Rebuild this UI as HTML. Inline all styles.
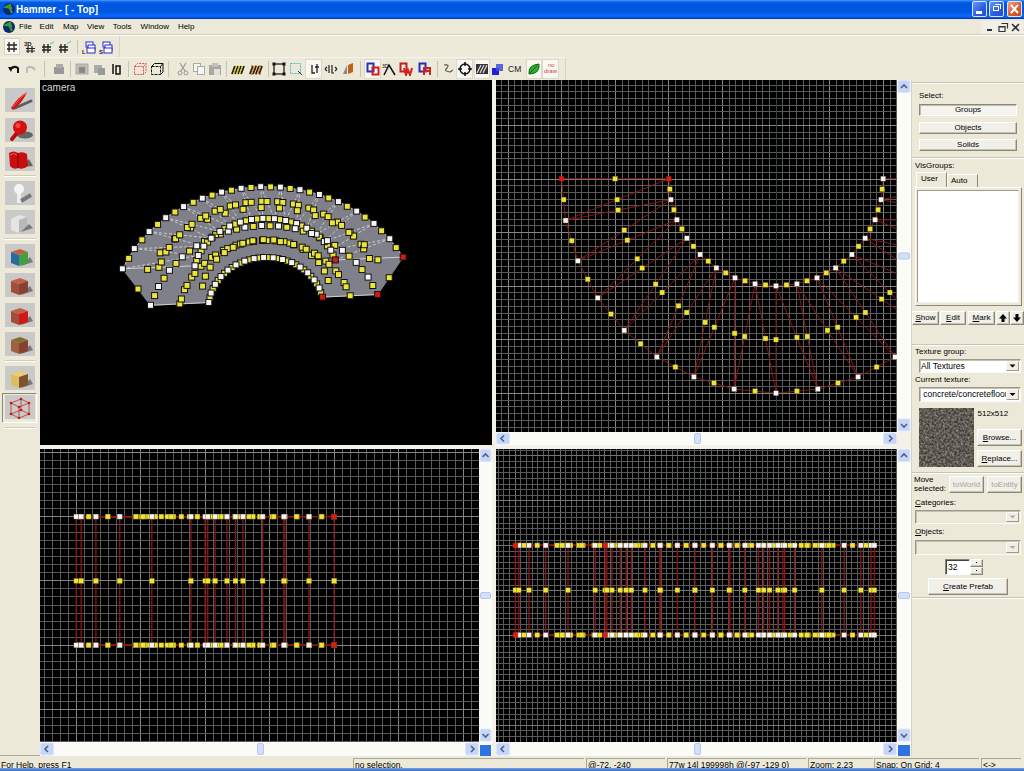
<!DOCTYPE html><html><head><meta charset="utf-8"><style>
html,body{margin:0;padding:0;}
body{width:1024px;height:771px;position:relative;overflow:hidden;background:#ece9d8;font-family:"Liberation Sans",sans-serif;font-size:8px;color:#000;}
.t{position:absolute;white-space:nowrap;line-height:10px;}
svg{display:block}
</style></head><body><div style="position:absolute;left:0px;top:0px;width:1024px;height:18px;background:linear-gradient(#4a9cfa 0px,#1a6cf2 1.5px,#0058e2 3px,#0056e0 12px,#0a66f8 15px,#0a64f4 17px,#0a48c0 18px);"></div><div style="position:absolute;left:0px;top:18px;width:1024px;height:1px;background:#0a3aa8;"></div><div class="t" style="left:16px;top:4px;color:#fff;font-weight:bold;font-size:10px;line-height:12px;">Hammer - [ - Top]</div><svg style="position:absolute;left:2px;top:2px" width="14" height="14"><circle cx="7" cy="7" r="6" fill="#0a2a6a"/><path d="M4,5 L8,3 L9,6 Z M7,5 L10,11" stroke="#3c9a3c" stroke-width="2" fill="#3c9a3c"/></svg><div style="position:absolute;left:972px;top:1px;width:15px;height:16px;background:linear-gradient(135deg,#6a9af6,#2a5ae0 60%,#2050d0);border:1px solid #d8e4fc;border-radius:2px;box-sizing:border-box;"></div><div style="position:absolute;left:989px;top:1px;width:15px;height:16px;background:linear-gradient(135deg,#6a9af6,#2a5ae0 60%,#2050d0);border:1px solid #d8e4fc;border-radius:2px;box-sizing:border-box;"></div><div style="position:absolute;left:1007px;top:1px;width:15px;height:16px;background:linear-gradient(135deg,#f4a080,#d85a30 60%,#c04a20);border:1px solid #d8e4fc;border-radius:2px;box-sizing:border-box;"></div><div style="position:absolute;left:976px;top:11px;width:6px;height:3px;background:#fff;"></div><div style="position:absolute;left:993px;top:6px;width:6px;height:5px;border:1.5px solid #fff;box-sizing:border-box;"></div><div style="position:absolute;left:995px;top:4px;width:6px;height:5px;border-top:1.5px solid #fff;border-right:1.5px solid #fff;box-sizing:border-box;"></div><svg style="position:absolute;left:1007px;top:1px" width="15" height="16"><path d="M4,4 L11,12 M11,4 L4,12" stroke="#fff" stroke-width="2"/></svg><div style="position:absolute;left:0px;top:19px;width:1024px;height:15px;background:#ece9d8;border-top:1px solid #dce4f4;box-sizing:border-box;"></div><svg style="position:absolute;left:2px;top:20px" width="14" height="14"><circle cx="7" cy="7" r="6" fill="#0a2a6a"/><path d="M4,5 L8,3 L9,6 Z M7,5 L10,11" stroke="#3c9a3c" stroke-width="2" fill="#3c9a3c"/></svg><div class="t" style="left:19px;top:22px;font-size:8px;">File</div><div class="t" style="left:39.6px;top:22px;font-size:8px;">Edit</div><div class="t" style="left:63px;top:22px;font-size:8px;">Map</div><div class="t" style="left:87px;top:22px;font-size:8px;">View</div><div class="t" style="left:112.8px;top:22px;font-size:8px;">Tools</div><div class="t" style="left:140.6px;top:22px;font-size:8px;">Window</div><div class="t" style="left:177.9px;top:22px;font-size:8px;">Help</div><div style="position:absolute;left:981px;top:21px;width:42px;height:13px;background:#f2f0e6;"></div><div style="position:absolute;left:987px;top:29px;width:5px;height:2px;background:#333;"></div><svg style="position:absolute;left:997px;top:22px" width="12" height="11"><path d="M4.5,1.5 H10.5 V6.5 M2,4.5 H8 V9.5 H2 Z M2,5 H8" fill="none" stroke="#333" stroke-width="1.2"/></svg><svg style="position:absolute;left:1010px;top:22px" width="11" height="11"><path d="M2,2 L9,9 M9,2 L2,9" stroke="#333" stroke-width="1.6"/></svg><div style="position:absolute;left:0px;top:34px;width:1024px;height:1px;background:#d4d0c0;"></div><div style="position:absolute;left:0px;top:35px;width:1024px;height:1px;background:#fbfaf5;"></div><div style="position:absolute;left:0px;top:36px;width:120px;height:21px;background:#ece9d8;border-right:1px solid #d8d4c4;box-sizing:border-box;"></div><div style="position:absolute;left:4px;top:38px;width:16px;height:17px;background:#faf9f4;border:1px solid #d6d2c4;box-sizing:border-box;"></div><svg style="position:absolute;left:5px;top:40px" width="14" height="14"><path d="M4,2 V12 M9,2 V12 M2,5 H12 M2,9 H12" stroke="#222" stroke-width="1.3"/></svg><svg style="position:absolute;left:23px;top:40px" width="14" height="14"><text x="1" y="6" font-size="6" font-weight="bold" font-family="Liberation Sans" fill="#222">3D</text><path d="M5,6 V13 M9,6 V13 M3,8.5 H12 M3,11 H12" stroke="#222" stroke-width="1.2"/></svg><svg style="position:absolute;left:41px;top:40px" width="14" height="14"><path d="M3,4 V13 M7,4 V13 M1,7 H10 M1,10 H10" stroke="#222" stroke-width="1.3"/><path d="M9,4 L13,2" stroke="#7ad6c4" stroke-width="1.5"/></svg><svg style="position:absolute;left:58px;top:40px" width="14" height="14"><path d="M3,4 V13 M7,4 V13 M1,7 H10 M1,10 H10" stroke="#222" stroke-width="1.3"/><path d="M9,4 L13,1" stroke="#7ad6c4" stroke-width="1.5"/></svg><div style="position:absolute;left:77px;top:40px;width:1px;height:14px;background:#c8c4b4;"></div><svg style="position:absolute;left:82px;top:40px" width="14" height="14"><rect x="4" y="2" width="7" height="5" fill="#fff" stroke="#2a2ad0"/><rect x="6" y="5" width="7" height="5" fill="#fff" stroke="#2a2ad0"/><rect x="5" y="8" width="8" height="5" fill="#fff" stroke="#2a2ad0"/><text x="0" y="14" font-size="6" font-weight="bold" font-family="Liberation Sans" fill="#222">L</text></svg><svg style="position:absolute;left:99px;top:40px" width="14" height="14"><rect x="4" y="2" width="7" height="5" fill="#fff" stroke="#2a2ad0"/><rect x="6" y="5" width="7" height="5" fill="#fff" stroke="#2a2ad0"/><rect x="5" y="8" width="8" height="5" fill="#fff" stroke="#2a2ad0"/><text x="0" y="14" font-size="6" font-weight="bold" font-family="Liberation Sans" fill="#222">S</text></svg><div style="position:absolute;left:0px;top:57px;width:566px;height:1px;background:#f6f4ec;"></div><div style="position:absolute;left:0px;top:58px;width:566px;height:22px;background:#ece9d8;border-right:1px solid #d8d4c4;box-sizing:border-box;"></div><div style="position:absolute;left:44px;top:61px;width:1px;height:16px;background:#c8c4b4;"></div><div style="position:absolute;left:70px;top:61px;width:1px;height:16px;background:#c8c4b4;"></div><div style="position:absolute;left:128px;top:61px;width:1px;height:16px;background:#c8c4b4;"></div><div style="position:absolute;left:168px;top:61px;width:1px;height:16px;background:#c8c4b4;"></div><div style="position:absolute;left:226px;top:61px;width:1px;height:16px;background:#c8c4b4;"></div><div style="position:absolute;left:268px;top:61px;width:1px;height:16px;background:#c8c4b4;"></div><div style="position:absolute;left:360px;top:61px;width:1px;height:16px;background:#c8c4b4;"></div><div style="position:absolute;left:437px;top:61px;width:1px;height:16px;background:#c8c4b4;"></div><div style="position:absolute;left:305px;top:59px;width:17px;height:20px;background:#f8f7f2;border:1px solid #dcd8ca;box-sizing:border-box;"></div><div style="position:absolute;left:364px;top:59px;width:17px;height:20px;background:#f8f7f2;border:1px solid #dcd8ca;box-sizing:border-box;"></div><div style="position:absolute;left:456px;top:59px;width:17px;height:20px;background:#f8f7f2;border:1px solid #dcd8ca;box-sizing:border-box;"></div><div style="position:absolute;left:474px;top:59px;width:16px;height:20px;background:#f8f7f2;border:1px solid #dcd8ca;box-sizing:border-box;"></div><div style="position:absolute;left:526px;top:59px;width:16px;height:20px;background:#f8f7f2;border:1px solid #dcd8ca;box-sizing:border-box;"></div><div style="position:absolute;left:542px;top:59px;width:17px;height:20px;background:#f8f7f2;border:1px solid #dcd8ca;box-sizing:border-box;"></div><svg style="position:absolute;left:7px;top:62px" width="14" height="14"><path d="M3,8 Q6,3 11,6 L11,11" fill="none" stroke="#111" stroke-width="2"/><path d="M1,5 L4,10 L6,5 Z" fill="#111"/></svg><svg style="position:absolute;left:24px;top:62px" width="14" height="14"><path d="M11,8 Q8,3 3,6 L3,11" fill="none" stroke="#bbb" stroke-width="2"/></svg><svg style="position:absolute;left:52px;top:62px" width="14" height="14"><rect x="2" y="5" width="10" height="7" fill="#999"/><rect x="4" y="2" width="7" height="4" fill="#aaa"/></svg><svg style="position:absolute;left:75px;top:62px" width="14" height="14"><rect x="1" y="2" width="12" height="10" fill="#bdbdb5" stroke="#aaa"/><rect x="4" y="5" width="6" height="6" fill="#888"/></svg><svg style="position:absolute;left:92px;top:62px" width="14" height="14"><rect x="2" y="3" width="8" height="8" fill="#aaa"/><rect x="6" y="6" width="7" height="7" fill="#999"/></svg><svg style="position:absolute;left:110px;top:62px" width="14" height="14"><path d="M3,2 V12 M6,4 H10 V12 H6 Z" stroke="#111" stroke-width="1.5" fill="none"/></svg><svg style="position:absolute;left:133px;top:62px" width="14" height="14"><rect x="1.5" y="4.5" width="9" height="8" fill="none" stroke="#e05050" stroke-dasharray="2 1"/><path d="M1.5,4.5 L4.5,1.5 H13 V10 L10.5,12.5 M10.5,4.5 L13,1.5" fill="none" stroke="#e05050" stroke-dasharray="2 1"/></svg><svg style="position:absolute;left:150px;top:62px" width="14" height="14"><rect x="1.5" y="4.5" width="9" height="8" fill="none" stroke="#111" stroke-dasharray="3 1"/><path d="M1.5,4.5 L4.5,1.5 H13 V10 L10.5,12.5 M10.5,4.5 L13,1.5" fill="none" stroke="#111"/></svg><svg style="position:absolute;left:176px;top:62px" width="14" height="14"><path d="M4,1 L9,9 M10,1 L5,9" stroke="#999" stroke-width="1.2"/><circle cx="4" cy="11" r="2" fill="none" stroke="#999"/><circle cx="10" cy="11" r="2" fill="none" stroke="#999"/></svg><svg style="position:absolute;left:192px;top:62px" width="14" height="14"><rect x="1.5" y="1.5" width="7" height="8" fill="#f4f4f0" stroke="#aaa"/><rect x="5.5" y="4.5" width="7" height="8" fill="#f4f4f0" stroke="#aaa"/></svg><svg style="position:absolute;left:208px;top:62px" width="14" height="14"><rect x="1" y="3" width="12" height="10" fill="#a8a8a0"/><rect x="4" y="1" width="6" height="4" fill="#c0c0b8"/><rect x="6" y="7" width="6" height="6" fill="#e0e0d8"/></svg><svg style="position:absolute;left:231px;top:62px" width="14" height="14"><path d="M1,12 L4,4 M4,12 L7,4 M7,12 L10,4 M10,12 L13,4" stroke="#222" stroke-width="2"/><path d="M2.5,12 L5.5,4 M5.5,12 L8.5,4 M8.5,12 L11.5,4" stroke="#e8d020" stroke-width="1.2"/></svg><svg style="position:absolute;left:249px;top:62px" width="14" height="14"><path d="M1,12 L4,4 M4,12 L7,4 M7,12 L10,4 M10,12 L13,4" stroke="#222" stroke-width="2"/><path d="M2.5,12 L5.5,4 M8.5,12 L11.5,4" stroke="#e8a020" stroke-width="1.4"/><path d="M2,4 H12 M2,12 H12" stroke="#c04010" stroke-width="1" stroke-dasharray="2 2"/></svg><svg style="position:absolute;left:272px;top:62px" width="14" height="14"><rect x="2" y="2" width="10" height="10" fill="none" stroke="#111" stroke-width="1.2"/><rect x="0.5" y="0.5" width="3" height="3" fill="#111"/><rect x="10.5" y="0.5" width="3" height="3" fill="#111"/><rect x="0.5" y="10.5" width="3" height="3" fill="#111"/><rect x="10.5" y="10.5" width="3" height="3" fill="#111"/></svg><svg style="position:absolute;left:289px;top:62px" width="14" height="14"><rect x="1.5" y="1.5" width="10" height="10" fill="none" stroke="#40c0c0" stroke-dasharray="2 1"/><path d="M9,9 L13,13" stroke="#333"/></svg><svg style="position:absolute;left:309px;top:62px" width="14" height="14"><path d="M3,3 V11 H6 M8,2 V11 M6,5 H10" stroke="#222" stroke-width="1.3" fill="none"/></svg><svg style="position:absolute;left:324px;top:62px" width="14" height="14"><path d="M1,7 L3,5 M1,7 L3,9 M13,7 L11,5 M13,7 L11,9 M5,3 V11 M8,3 V11 H10" stroke="#222" stroke-width="1.2" fill="none"/></svg><svg style="position:absolute;left:341px;top:62px" width="14" height="14"><path d="M2,12 L6,3 L6,12 Z" fill="#888"/><path d="M7,3 L12,1 L12,10 L7,12 Z" fill="#c06020"/></svg><svg style="position:absolute;left:366px;top:62px" width="14" height="14"><rect x="1.5" y="1.5" width="6" height="8" fill="none" stroke="#2030c0" stroke-width="2"/><rect x="6.5" y="5.5" width="6" height="7" fill="none" stroke="#d02020" stroke-width="2"/></svg><svg style="position:absolute;left:382px;top:62px" width="14" height="14"><path d="M2,13 L7,3 L13,13" fill="none" stroke="#111" stroke-width="1.5"/><text x="0" y="6" font-size="5" font-family="Liberation Sans" fill="#111">3D</text></svg><svg style="position:absolute;left:399px;top:62px" width="15" height="14"><rect x="1.5" y="1.5" width="6" height="8" fill="none" stroke="#c02020" stroke-width="2"/><path d="M5,6 L7,13 L9,8 L11,13 L13,6" fill="none" stroke="#d02020" stroke-width="2"/></svg><svg style="position:absolute;left:418px;top:62px" width="14" height="14"><rect x="1.5" y="1.5" width="6" height="8" fill="none" stroke="#2030c0" stroke-width="2"/><path d="M6,13 V6 H12 V13 M6,9 H12" fill="none" stroke="#d02020" stroke-width="2"/></svg><svg style="position:absolute;left:441px;top:62px" width="12" height="14"><path d="M3,3 Q9,2 6,6 Q2,9 9,10 M9,10 L12,8" fill="none" stroke="#555" stroke-width="1.2"/></svg><svg style="position:absolute;left:458px;top:62px" width="14" height="14"><circle cx="7" cy="7" r="5" fill="none" stroke="#111" stroke-width="1.5"/><path d="M7,0 V4 M7,10 V14 M0,7 H4 M10,7 H14" stroke="#111" stroke-width="1.5"/></svg><svg style="position:absolute;left:475px;top:62px" width="14" height="14"><rect x="1" y="2" width="12" height="10" fill="#333"/><path d="M2,11 L6,3 M5,11 L9,3 M8,11 L12,3" stroke="#ddd" stroke-width="1.2"/></svg><svg style="position:absolute;left:491px;top:62px" width="14" height="14"><rect x="1" y="6" width="7" height="7" fill="#2020d0"/><rect x="5" y="2" width="7" height="7" fill="#4050e0" opacity="0.85"/></svg><div class="t" style="left:508px;top:64px;font-size:8.5px;color:#222;">CM</div><svg style="position:absolute;left:527px;top:62px" width="14" height="14"><path d="M2,12 Q1,3 12,2 Q13,12 2,12 Z" fill="#30b030" stroke="#106010"/><path d="M3,11 L10,4" stroke="#106010"/></svg><div class="t" style="left:545px;top:62px;font-size:6px;color:#d04040;line-height:6px;left:548px;">no</div><div class="t" style="left:544px;top:68px;font-size:6px;color:#d04040;line-height:6px;">draw</div><div style="position:absolute;left:0px;top:80px;width:40px;height:676px;background:#ece9d8;"></div><div style="position:absolute;left:5px;top:88px;width:30px;height:24px;background:#c9c9c7;"></div><svg style="position:absolute;left:5px;top:88px" width="30" height="24"><path d="M10,20 L26,13" stroke="#3a3a3a" stroke-width="3" opacity="0.75" stroke-linecap="round"/><path d="M6,20 Q12,10 22,4 Q18,14 8,22 Z" fill="#d81010"/><path d="M8,19 Q14,11 21,5" stroke="#ff6060" stroke-width="1" fill="none"/></svg><div style="position:absolute;left:5px;top:118px;width:30px;height:24px;background:#c9c9c7;"></div><svg style="position:absolute;left:5px;top:118px" width="30" height="24"><ellipse cx="20" cy="17" rx="8" ry="3.5" fill="#3a3a3a" opacity="0.7"/><path d="M12,15 L7,21" stroke="#b80c0c" stroke-width="4" stroke-linecap="round"/><circle cx="15" cy="9.5" r="7" fill="#d41010"/><circle cx="13" cy="7.5" r="2.5" fill="#ff5050" opacity="0.8"/></svg><div style="position:absolute;left:5px;top:147px;width:30px;height:24px;background:#c9c9c7;"></div><svg style="position:absolute;left:5px;top:147px" width="30" height="24"><path d="M16,20 L28,19 L24,12 Z" fill="#3a3a3a" opacity="0.7"/><path d="M4,6 Q9,3 13,6 Q18,4 22,7 L23,19 Q18,23 13,21 Q8,23 5,19 Z" fill="#c80e0e"/><path d="M13,6 V21" stroke="#8a0808" stroke-width="1.2"/><path d="M5,8 Q9,5 12,8" stroke="#ff5a5a" stroke-width="1" fill="none"/></svg><div style="position:absolute;left:5px;top:181px;width:30px;height:24px;background:#c9c9c7;"></div><svg style="position:absolute;left:5px;top:181px" width="30" height="24"><path d="M14,12 V22" stroke="#eee" stroke-width="4"/><path d="M16,20 L26,14" stroke="#444" stroke-width="4" opacity="0.6"/><circle cx="14" cy="8" r="5" fill="#f4f4f4"/></svg><div style="position:absolute;left:5px;top:210px;width:30px;height:24px;background:#c9c9c7;"></div><svg style="position:absolute;left:5px;top:210px" width="30" height="24"><path d="M6,9 L14,5 L22,7 L22,19 L14,23 L6,20 Z" fill="#e4e4e4"/><path d="M14,10 L22,7 V19 L14,23 Z" fill="#b8b8b8"/><path d="M16,22 L28,18 L24,14" fill="#444" opacity="0.6"/></svg><div style="position:absolute;left:5px;top:244px;width:30px;height:24px;background:#c9c9c7;"></div><svg style="position:absolute;left:5px;top:244px" width="30" height="24"><path d="M16,22 L28,18 L25,13" fill="#444" opacity="0.6"/><path d="M6,8 L15,5 L23,8 L14,11 Z" fill="#c06040"/><path d="M6,8 L14,11 L14,22 L6,19 Z" fill="#2a6aa0"/><path d="M14,11 L23,8 L23,19 L14,22 Z" fill="#40a040"/></svg><div style="position:absolute;left:5px;top:273px;width:30px;height:24px;background:#c9c9c7;"></div><svg style="position:absolute;left:5px;top:273px" width="30" height="24"><path d="M16,22 L28,18 L25,13" fill="#444" opacity="0.6"/><path d="M6,8 L15,5 L23,8 L14,11 Z" fill="#c06048"/><path d="M6,8 L14,11 L14,22 L6,19 Z" fill="#a05038"/><path d="M14,11 L23,8 L23,19 L14,22 Z" fill="#884030"/></svg><div style="position:absolute;left:5px;top:303px;width:30px;height:24px;background:#c9c9c7;"></div><svg style="position:absolute;left:5px;top:303px" width="30" height="24"><path d="M16,22 L28,18 L25,13" fill="#444" opacity="0.6"/><path d="M6,8 L15,5 L23,8 L14,11 Z" fill="#c06048"/><path d="M6,8 L14,11 L14,22 L6,19 Z" fill="#a05038"/><path d="M14,11 L23,8 L23,19 L14,22 Z" fill="#d01818"/></svg><div style="position:absolute;left:5px;top:332px;width:30px;height:24px;background:#c9c9c7;"></div><svg style="position:absolute;left:5px;top:332px" width="30" height="24"><path d="M16,22 L28,18 L25,13" fill="#444" opacity="0.6"/><path d="M6,8 L15,5 L23,8 L14,11 Z" fill="#807030"/><path d="M6,8 L14,11 L14,22 L6,19 Z" fill="#a06040"/><path d="M14,11 L23,8 L23,19 L14,22 Z" fill="#884030"/></svg><div style="position:absolute;left:5px;top:366px;width:30px;height:24px;background:#c9c9c7;"></div><svg style="position:absolute;left:5px;top:366px" width="30" height="24"><path d="M16,22 L28,18 L25,13" fill="#444" opacity="0.6"/><path d="M6,8 L15,5 L23,8 L14,11 Z" fill="#e8d070"/><path d="M6,8 L14,11 L14,22 L6,19 Z" fill="#d8c060"/><path d="M14,11 L23,8 L23,19 L14,22 Z" fill="#805030"/></svg><div style="position:absolute;left:2px;top:393px;width:35px;height:30px;border:1px solid #fff;border-right-color:#b8b4a4;border-bottom-color:#b8b4a4;box-sizing:border-box;"></div><div style="position:absolute;left:2px;top:393px;width:35px;height:30px;border:1px solid #8a877a;border-right-color:#fff;border-bottom-color:#fff;box-sizing:border-box;"></div><div style="position:absolute;left:5px;top:395px;width:30px;height:24px;background:#c9c9c7;"></div><svg style="position:absolute;left:5px;top:395px" width="30" height="24"><path d="M6,8 L16,4 L24,8 L24,19 L14,23 L6,19 Z M6,8 L14,12 L24,8 M14,12 V23 M6,19 L16,15 L24,19 M16,4 V15" fill="none" stroke="#c03030" stroke-width="0.8"/><circle cx="6" cy="8" r="1.3" fill="#c01818"/><circle cx="16" cy="4" r="1.3" fill="#c01818"/><circle cx="24" cy="8" r="1.3" fill="#c01818"/><circle cx="14" cy="12" r="1.3" fill="#c01818"/><circle cx="6" cy="19" r="1.3" fill="#c01818"/><circle cx="14" cy="23" r="1.3" fill="#c01818"/><circle cx="24" cy="19" r="1.3" fill="#c01818"/><circle cx="16" cy="15" r="1.3" fill="#c01818"/></svg><div style="position:absolute;left:4px;top:175px;width:32px;height:1px;background:#d0ccbc;"></div><div style="position:absolute;left:4px;top:176px;width:32px;height:1px;background:#fff;"></div><div style="position:absolute;left:4px;top:238px;width:32px;height:1px;background:#d0ccbc;"></div><div style="position:absolute;left:4px;top:239px;width:32px;height:1px;background:#fff;"></div><div style="position:absolute;left:4px;top:360px;width:32px;height:1px;background:#d0ccbc;"></div><div style="position:absolute;left:4px;top:361px;width:32px;height:1px;background:#fff;"></div><div style="position:absolute;left:4px;top:427px;width:32px;height:1px;background:#d0ccbc;"></div><div style="position:absolute;left:4px;top:428px;width:32px;height:1px;background:#fff;"></div><div style="position:absolute;left:0px;top:755px;width:40px;height:1px;background:#aca899;"></div><div style="position:absolute;left:492px;top:80px;width:4px;height:676px;background:#f3f1e8;"></div><div style="position:absolute;left:40px;top:445px;width:871px;height:4px;background:#f3f1e8;"></div><svg style="position:absolute;left:40px;top:80px" width="452" height="365" viewBox="40 80 452 365"><rect x="40" y="80" width="452" height="365" fill="#000"/><g fill="#80808a" stroke="#80808a" stroke-width="0.6"><polygon points="403.2,257.1 389.8,238.7 330.8,250.2 335.3,259.9"/><polygon points="377.7,294.5 368.1,277.1 319.1,288 322.4,297.1"/><polygon points="377.7,294.5 368.1,277.1 389.8,238.7 403.2,257.1"/><polygon points="322.4,297.1 319.1,288 330.8,250.2 335.3,259.9"/><polygon points="389.8,238.7 374,223.4 324.3,241.6 330.8,250.2"/><polygon points="368.1,277.1 356.2,262.4 314.1,279.9 319.1,288"/><polygon points="368.1,277.1 356.2,262.4 374,223.4 389.8,238.7"/><polygon points="319.1,288 314.1,279.9 324.3,241.6 330.8,250.2"/><polygon points="374,223.4 356.7,211.1 316.2,234.2 324.3,241.6"/><polygon points="356.2,262.4 342.4,250.3 307.7,272.8 314.1,279.9"/><polygon points="356.2,262.4 342.4,250.3 356.7,211.1 374,223.4"/><polygon points="314.1,279.9 307.7,272.8 316.2,234.2 324.3,241.6"/><polygon points="356.7,211.1 338.4,201.6 306.8,228.2 316.2,234.2"/><polygon points="342.4,250.3 327.4,240.7 300.1,267.1 307.7,272.8"/><polygon points="342.4,250.3 327.4,240.7 338.4,201.6 356.7,211.1"/><polygon points="307.7,272.8 300.1,267.1 306.8,228.2 316.2,234.2"/><polygon points="338.4,201.6 319.4,194.5 296.6,223.6 306.8,228.2"/><polygon points="327.4,240.7 311.6,233.5 291.7,262.6 300.1,267.1"/><polygon points="327.4,240.7 311.6,233.5 319.4,194.5 338.4,201.6"/><polygon points="300.1,267.1 291.7,262.6 296.6,223.6 306.8,228.2"/><polygon points="319.4,194.5 300,189.7 285.7,220.5 296.6,223.6"/><polygon points="311.6,233.5 295.2,228.7 282.6,259.5 291.7,262.6"/><polygon points="311.6,233.5 295.2,228.7 300,189.7 319.4,194.5"/><polygon points="291.7,262.6 282.6,259.5 285.7,220.5 296.6,223.6"/><polygon points="300,189.7 280.4,187.1 274.4,218.7 285.7,220.5"/><polygon points="295.2,228.7 278.5,226 273.2,257.8 282.6,259.5"/><polygon points="295.2,228.7 278.5,226 280.4,187.1 300,189.7"/><polygon points="282.6,259.5 273.2,257.8 274.4,218.7 285.7,220.5"/><polygon points="280.4,187.1 260.7,186.7 262.9,218.4 274.4,218.7"/><polygon points="278.5,226 261.7,225.5 263.6,257.5 273.2,257.8"/><polygon points="278.5,226 261.7,225.5 260.7,186.7 280.4,187.1"/><polygon points="273.2,257.8 263.6,257.5 262.9,218.4 274.4,218.7"/><polygon points="260.7,186.7 241.1,188.3 251.5,219.5 262.9,218.4"/><polygon points="261.7,225.5 244.9,227.2 254.1,258.6 263.6,257.5"/><polygon points="261.7,225.5 244.9,227.2 241.1,188.3 260.7,186.7"/><polygon points="263.6,257.5 254.1,258.6 251.5,219.5 262.9,218.4"/><polygon points="241.1,188.3 221.6,192.1 240.3,222.1 251.5,219.5"/><polygon points="244.9,227.2 228.3,231.1 244.8,261.1 254.1,258.6"/><polygon points="244.9,227.2 228.3,231.1 221.6,192.1 241.1,188.3"/><polygon points="254.1,258.6 244.8,261.1 240.3,222.1 251.5,219.5"/><polygon points="221.6,192.1 202.3,198.2 229.7,226 240.3,222.1"/><polygon points="228.3,231.1 212.1,237.3 236,264.9 244.8,261.1"/><polygon points="228.3,231.1 212.1,237.3 202.3,198.2 221.6,192.1"/><polygon points="244.8,261.1 236,264.9 229.7,226 240.3,222.1"/><polygon points="202.3,198.2 183.6,206.6 219.9,231.4 229.7,226"/><polygon points="212.1,237.3 196.7,245.8 228,270.1 236,264.9"/><polygon points="212.1,237.3 196.7,245.8 183.6,206.6 202.3,198.2"/><polygon points="236,264.9 228,270.1 219.9,231.4 229.7,226"/><polygon points="183.6,206.6 165.7,217.7 211.2,238.2 219.9,231.4"/><polygon points="196.7,245.8 182.3,256.8 221,276.6 228,270.1"/><polygon points="196.7,245.8 182.3,256.8 165.7,217.7 183.6,206.6"/><polygon points="228,270.1 221,276.6 211.2,238.2 219.9,231.4"/><polygon points="165.7,217.7 149.1,231.6 203.8,246.2 211.2,238.2"/><polygon points="182.3,256.8 169.4,270.3 215.3,284.3 221,276.6"/><polygon points="182.3,256.8 169.4,270.3 149.1,231.6 165.7,217.7"/><polygon points="221,276.6 215.3,284.3 203.8,246.2 211.2,238.2"/><polygon points="149.1,231.6 134.3,248.6 198.3,255.5 203.8,246.2"/><polygon points="169.4,270.3 158.5,286.5 211.1,293 215.3,284.3"/><polygon points="169.4,270.3 158.5,286.5 134.3,248.6 149.1,231.6"/><polygon points="215.3,284.3 211.1,293 198.3,255.5 203.8,246.2"/><polygon points="134.3,248.6 122.4,268.8 195,265.8 198.3,255.5"/><polygon points="158.5,286.5 150.5,305.3 208.8,302.5 211.1,293"/><polygon points="158.5,286.5 150.5,305.3 122.4,268.8 134.3,248.6"/><polygon points="211.1,293 208.8,302.5 195,265.8 198.3,255.5"/><polygon points="150.5,305.3 208.8,302.5 195,265.8 122.4,268.8"/><polygon points="377.7,294.5 322.4,297.1 335.3,259.9 403.2,257.1"/></g><g stroke="#e8e8f4" stroke-width="1" stroke-dasharray="3 2" opacity="0.7"><line x1="403.2" y1="257.1" x2="389.8" y2="238.7"/><line x1="335.3" y1="259.9" x2="330.8" y2="250.2"/><line x1="389.8" y1="238.7" x2="330.8" y2="250.2"/><line x1="389.8" y1="238.7" x2="335.3" y2="259.9"/><line x1="389.8" y1="238.7" x2="374" y2="223.4"/><line x1="330.8" y1="250.2" x2="324.3" y2="241.6"/><line x1="374" y1="223.4" x2="324.3" y2="241.6"/><line x1="374" y1="223.4" x2="330.8" y2="250.2"/><line x1="374" y1="223.4" x2="356.7" y2="211.1"/><line x1="324.3" y1="241.6" x2="316.2" y2="234.2"/><line x1="356.7" y1="211.1" x2="316.2" y2="234.2"/><line x1="356.7" y1="211.1" x2="324.3" y2="241.6"/><line x1="356.7" y1="211.1" x2="338.4" y2="201.6"/><line x1="316.2" y1="234.2" x2="306.8" y2="228.2"/><line x1="338.4" y1="201.6" x2="306.8" y2="228.2"/><line x1="338.4" y1="201.6" x2="316.2" y2="234.2"/><line x1="338.4" y1="201.6" x2="319.4" y2="194.5"/><line x1="306.8" y1="228.2" x2="296.6" y2="223.6"/><line x1="319.4" y1="194.5" x2="296.6" y2="223.6"/><line x1="319.4" y1="194.5" x2="306.8" y2="228.2"/><line x1="319.4" y1="194.5" x2="300" y2="189.7"/><line x1="296.6" y1="223.6" x2="285.7" y2="220.5"/><line x1="300" y1="189.7" x2="285.7" y2="220.5"/><line x1="300" y1="189.7" x2="296.6" y2="223.6"/><line x1="300" y1="189.7" x2="280.4" y2="187.1"/><line x1="285.7" y1="220.5" x2="274.4" y2="218.7"/><line x1="280.4" y1="187.1" x2="274.4" y2="218.7"/><line x1="280.4" y1="187.1" x2="285.7" y2="220.5"/><line x1="280.4" y1="187.1" x2="260.7" y2="186.7"/><line x1="274.4" y1="218.7" x2="262.9" y2="218.4"/><line x1="260.7" y1="186.7" x2="262.9" y2="218.4"/><line x1="260.7" y1="186.7" x2="274.4" y2="218.7"/><line x1="260.7" y1="186.7" x2="241.1" y2="188.3"/><line x1="262.9" y1="218.4" x2="251.5" y2="219.5"/><line x1="241.1" y1="188.3" x2="251.5" y2="219.5"/><line x1="241.1" y1="188.3" x2="262.9" y2="218.4"/><line x1="241.1" y1="188.3" x2="221.6" y2="192.1"/><line x1="251.5" y1="219.5" x2="240.3" y2="222.1"/><line x1="221.6" y1="192.1" x2="240.3" y2="222.1"/><line x1="221.6" y1="192.1" x2="251.5" y2="219.5"/><line x1="221.6" y1="192.1" x2="202.3" y2="198.2"/><line x1="240.3" y1="222.1" x2="229.7" y2="226"/><line x1="202.3" y1="198.2" x2="229.7" y2="226"/><line x1="202.3" y1="198.2" x2="240.3" y2="222.1"/><line x1="202.3" y1="198.2" x2="183.6" y2="206.6"/><line x1="229.7" y1="226" x2="219.9" y2="231.4"/><line x1="183.6" y1="206.6" x2="219.9" y2="231.4"/><line x1="183.6" y1="206.6" x2="229.7" y2="226"/><line x1="183.6" y1="206.6" x2="165.7" y2="217.7"/><line x1="219.9" y1="231.4" x2="211.2" y2="238.2"/><line x1="165.7" y1="217.7" x2="211.2" y2="238.2"/><line x1="165.7" y1="217.7" x2="219.9" y2="231.4"/><line x1="165.7" y1="217.7" x2="149.1" y2="231.6"/><line x1="211.2" y1="238.2" x2="203.8" y2="246.2"/><line x1="149.1" y1="231.6" x2="203.8" y2="246.2"/><line x1="149.1" y1="231.6" x2="211.2" y2="238.2"/><line x1="149.1" y1="231.6" x2="134.3" y2="248.6"/><line x1="203.8" y1="246.2" x2="198.3" y2="255.5"/><line x1="134.3" y1="248.6" x2="198.3" y2="255.5"/><line x1="134.3" y1="248.6" x2="203.8" y2="246.2"/><line x1="134.3" y1="248.6" x2="122.4" y2="268.8"/><line x1="198.3" y1="255.5" x2="195" y2="265.8"/><line x1="122.4" y1="268.8" x2="198.3" y2="255.5"/></g><g stroke="#e4e4e4" stroke-width="1" opacity="0.8"><line x1="377.7" y1="294.5" x2="322.4" y2="297.1"/><line x1="403.2" y1="257.1" x2="335.3" y2="259.9"/><line x1="150.5" y1="305.3" x2="208.8" y2="302.5"/><line x1="122.4" y1="268.8" x2="195" y2="265.8"/></g><g opacity="0.4"></g><g stroke="#101010" stroke-width="1"><rect x="369.8" y="282.5" width="6" height="6" fill="#ece43a"/><rect x="317.7" y="289.5" width="6" height="6" fill="#ece43a"/><rect x="347.2" y="292.8" width="6" height="6" fill="#ece43a"/><rect x="341.1" y="279.5" width="6" height="6" fill="#ece43a"/><rect x="343.1" y="283.8" width="6" height="6" fill="#ece43a"/><rect x="393.2" y="244.6" width="6" height="6" fill="#ece43a"/><rect x="330" y="252" width="6" height="6" fill="#ece43a"/><rect x="366.4" y="255.5" width="6" height="6" fill="#ece43a"/><rect x="358" y="241.3" width="6" height="6" fill="#ece43a"/><rect x="360.7" y="245.9" width="6" height="6" fill="#ece43a"/><rect x="386.2" y="274.7" width="6" height="6" fill="#ece43a"/><rect x="325.2" y="277.5" width="6" height="6" fill="#ece43a"/><rect x="374.9" y="256.8" width="6" height="6" fill="#ece43a"/><rect x="321.4" y="268" width="6" height="6" fill="#ece43a"/><rect x="359" y="266.6" width="6" height="6" fill="#ece43a"/><rect x="313.6" y="280.9" width="6" height="6" fill="#ece43a"/><rect x="332.8" y="267.9" width="6" height="6" fill="#ece43a"/><rect x="335.5" y="271.6" width="6" height="6" fill="#ece43a"/><rect x="378.6" y="227.8" width="6" height="6" fill="#ece43a"/><rect x="324.5" y="242.8" width="6" height="6" fill="#ece43a"/><rect x="347.1" y="229.2" width="6" height="6" fill="#ece43a"/><rect x="350.6" y="233.1" width="6" height="6" fill="#ece43a"/><rect x="361.3" y="241.7" width="6" height="6" fill="#ece43a"/><rect x="315.7" y="259.6" width="6" height="6" fill="#ece43a"/><rect x="346.1" y="253.2" width="6" height="6" fill="#ece43a"/><rect x="307.8" y="273.3" width="6" height="6" fill="#ece43a"/><rect x="322.8" y="258.1" width="6" height="6" fill="#ece43a"/><rect x="326" y="261.3" width="6" height="6" fill="#ece43a"/><rect x="362.1" y="214.1" width="6" height="6" fill="#ece43a"/><rect x="317.2" y="234.8" width="6" height="6" fill="#ece43a"/><rect x="334.5" y="219.1" width="6" height="6" fill="#ece43a"/><rect x="338.6" y="222.4" width="6" height="6" fill="#ece43a"/><rect x="345.9" y="229.4" width="6" height="6" fill="#ece43a"/><rect x="308.5" y="252.4" width="6" height="6" fill="#ece43a"/><rect x="331.8" y="242.4" width="6" height="6" fill="#ece43a"/><rect x="300.8" y="266.9" width="6" height="6" fill="#ece43a"/><rect x="311.5" y="250.2" width="6" height="6" fill="#ece43a"/><rect x="315.2" y="252.8" width="6" height="6" fill="#ece43a"/><rect x="344.3" y="203.3" width="6" height="6" fill="#ece43a"/><rect x="308.5" y="228.2" width="6" height="6" fill="#ece43a"/><rect x="320.6" y="211.1" width="6" height="6" fill="#ece43a"/><rect x="325.1" y="213.7" width="6" height="6" fill="#ece43a"/><rect x="329.4" y="219.8" width="6" height="6" fill="#ece43a"/><rect x="300.2" y="246.4" width="6" height="6" fill="#ece43a"/><rect x="316.4" y="234.1" width="6" height="6" fill="#ece43a"/><rect x="292.8" y="261.8" width="6" height="6" fill="#ece43a"/><rect x="299.2" y="244.2" width="6" height="6" fill="#ece43a"/><rect x="303.2" y="246.2" width="6" height="6" fill="#ece43a"/><rect x="325.7" y="195" width="6" height="6" fill="#ece43a"/><rect x="298.7" y="222.9" width="6" height="6" fill="#ece43a"/><rect x="305.8" y="205.1" width="6" height="6" fill="#ece43a"/><rect x="310.6" y="207" width="6" height="6" fill="#ece43a"/><rect x="312.2" y="212.6" width="6" height="6" fill="#ece43a"/><rect x="290.9" y="241.9" width="6" height="6" fill="#ece43a"/><rect x="300.3" y="228.1" width="6" height="6" fill="#ece43a"/><rect x="284.1" y="258" width="6" height="6" fill="#ece43a"/><rect x="286.3" y="240.1" width="6" height="6" fill="#ece43a"/><rect x="290.6" y="241.5" width="6" height="6" fill="#ece43a"/><rect x="306.6" y="189.1" width="6" height="6" fill="#ece43a"/><rect x="288.1" y="219" width="6" height="6" fill="#ece43a"/><rect x="290.4" y="201" width="6" height="6" fill="#ece43a"/><rect x="295.4" y="202.3" width="6" height="6" fill="#ece43a"/><rect x="294.4" y="207.7" width="6" height="6" fill="#ece43a"/><rect x="281" y="238.7" width="6" height="6" fill="#ece43a"/><rect x="283.8" y="224.3" width="6" height="6" fill="#ece43a"/><rect x="274.9" y="255.6" width="6" height="6" fill="#ece43a"/><rect x="273" y="237.9" width="6" height="6" fill="#ece43a"/><rect x="277.4" y="238.6" width="6" height="6" fill="#ece43a"/><rect x="287.2" y="185.4" width="6" height="6" fill="#ece43a"/><rect x="277" y="216.6" width="6" height="6" fill="#ece43a"/><rect x="274.6" y="198.7" width="6" height="6" fill="#ece43a"/><rect x="279.8" y="199.5" width="6" height="6" fill="#ece43a"/><rect x="276.4" y="205.1" width="6" height="6" fill="#ece43a"/><rect x="270.7" y="237" width="6" height="6" fill="#ece43a"/><rect x="267.1" y="222.8" width="6" height="6" fill="#ece43a"/><rect x="265.4" y="254.6" width="6" height="6" fill="#ece43a"/><rect x="259.6" y="237.5" width="6" height="6" fill="#ece43a"/><rect x="264" y="237.6" width="6" height="6" fill="#ece43a"/><rect x="267.6" y="183.9" width="6" height="6" fill="#ece43a"/><rect x="265.6" y="215.6" width="6" height="6" fill="#ece43a"/><rect x="258.7" y="198.3" width="6" height="6" fill="#ece43a"/><rect x="264" y="198.5" width="6" height="6" fill="#ece43a"/><rect x="258.2" y="204.6" width="6" height="6" fill="#ece43a"/><rect x="260.3" y="236.7" width="6" height="6" fill="#ece43a"/><rect x="250.3" y="223.4" width="6" height="6" fill="#ece43a"/><rect x="255.8" y="255" width="6" height="6" fill="#ece43a"/><rect x="246.2" y="238.9" width="6" height="6" fill="#ece43a"/><rect x="250.6" y="238.4" width="6" height="6" fill="#ece43a"/><rect x="248" y="184.5" width="6" height="6" fill="#ece43a"/><rect x="254.2" y="216" width="6" height="6" fill="#ece43a"/><rect x="242.9" y="199.7" width="6" height="6" fill="#ece43a"/><rect x="248.2" y="199.3" width="6" height="6" fill="#ece43a"/><rect x="240.1" y="206.3" width="6" height="6" fill="#ece43a"/><rect x="249.9" y="237.8" width="6" height="6" fill="#ece43a"/><rect x="233.6" y="226.2" width="6" height="6" fill="#ece43a"/><rect x="246.4" y="256.8" width="6" height="6" fill="#ece43a"/><rect x="233" y="242.2" width="6" height="6" fill="#ece43a"/><rect x="237.5" y="241.1" width="6" height="6" fill="#ece43a"/><rect x="228.4" y="187.2" width="6" height="6" fill="#ece43a"/><rect x="242.9" y="217.8" width="6" height="6" fill="#ece43a"/><rect x="227.3" y="203" width="6" height="6" fill="#ece43a"/><rect x="232.5" y="201.9" width="6" height="6" fill="#ece43a"/><rect x="222.2" y="210.2" width="6" height="6" fill="#ece43a"/><rect x="239.8" y="240.3" width="6" height="6" fill="#ece43a"/><rect x="217.3" y="231.1" width="6" height="6" fill="#ece43a"/><rect x="237.4" y="260" width="6" height="6" fill="#ece43a"/><rect x="220.4" y="247.3" width="6" height="6" fill="#ece43a"/><rect x="224.7" y="245.6" width="6" height="6" fill="#ece43a"/><rect x="209.1" y="192.1" width="6" height="6" fill="#ece43a"/><rect x="232.1" y="221" width="6" height="6" fill="#ece43a"/><rect x="212.1" y="208.2" width="6" height="6" fill="#ece43a"/><rect x="217.3" y="206.4" width="6" height="6" fill="#ece43a"/><rect x="204.6" y="216.3" width="6" height="6" fill="#ece43a"/><rect x="230.2" y="244.3" width="6" height="6" fill="#ece43a"/><rect x="201.5" y="238.4" width="6" height="6" fill="#ece43a"/><rect x="229.1" y="264.5" width="6" height="6" fill="#ece43a"/><rect x="208.6" y="254.4" width="6" height="6" fill="#ece43a"/><rect x="212.6" y="252" width="6" height="6" fill="#ece43a"/><rect x="190.2" y="199.3" width="6" height="6" fill="#ece43a"/><rect x="221.9" y="225.7" width="6" height="6" fill="#ece43a"/><rect x="197.7" y="215.3" width="6" height="6" fill="#ece43a"/><rect x="202.7" y="212.9" width="6" height="6" fill="#ece43a"/><rect x="187.7" y="224.9" width="6" height="6" fill="#ece43a"/><rect x="221.3" y="249.6" width="6" height="6" fill="#ece43a"/><rect x="186.6" y="248.1" width="6" height="6" fill="#ece43a"/><rect x="221.6" y="270.3" width="6" height="6" fill="#ece43a"/><rect x="197.9" y="263.3" width="6" height="6" fill="#ece43a"/><rect x="201.6" y="260.3" width="6" height="6" fill="#ece43a"/><rect x="171.9" y="209" width="6" height="6" fill="#ece43a"/><rect x="212.6" y="231.7" width="6" height="6" fill="#ece43a"/><rect x="184.4" y="224.5" width="6" height="6" fill="#ece43a"/><rect x="189" y="221.3" width="6" height="6" fill="#ece43a"/><rect x="171.7" y="236" width="6" height="6" fill="#ece43a"/><rect x="213.6" y="256.2" width="6" height="6" fill="#ece43a"/><rect x="173" y="260.4" width="6" height="6" fill="#ece43a"/><rect x="215.2" y="277.4" width="6" height="6" fill="#ece43a"/><rect x="188.7" y="274.1" width="6" height="6" fill="#ece43a"/><rect x="191.9" y="270.4" width="6" height="6" fill="#ece43a"/><rect x="154.6" y="221.4" width="6" height="6" fill="#ece43a"/><rect x="204.6" y="239.1" width="6" height="6" fill="#ece43a"/><rect x="172.6" y="235.7" width="6" height="6" fill="#ece43a"/><rect x="176.7" y="231.8" width="6" height="6" fill="#ece43a"/><rect x="157.2" y="249.8" width="6" height="6" fill="#ece43a"/><rect x="207.1" y="264.2" width="6" height="6" fill="#ece43a"/><rect x="161.1" y="275.2" width="6" height="6" fill="#ece43a"/><rect x="210.2" y="285.6" width="6" height="6" fill="#ece43a"/><rect x="181.5" y="286.7" width="6" height="6" fill="#ece43a"/><rect x="184" y="282.4" width="6" height="6" fill="#ece43a"/><rect x="138.9" y="236.8" width="6" height="6" fill="#ece43a"/><rect x="198.1" y="247.8" width="6" height="6" fill="#ece43a"/><rect x="162.9" y="249" width="6" height="6" fill="#ece43a"/><rect x="166.2" y="244.4" width="6" height="6" fill="#ece43a"/><rect x="144.6" y="266.4" width="6" height="6" fill="#ece43a"/><rect x="202.4" y="273.2" width="6" height="6" fill="#ece43a"/><rect x="151.6" y="292.6" width="6" height="6" fill="#ece43a"/><rect x="207" y="294.7" width="6" height="6" fill="#ece43a"/><rect x="176.8" y="300.9" width="6" height="6" fill="#ece43a"/><rect x="178.4" y="296" width="6" height="6" fill="#ece43a"/><rect x="125.6" y="255.3" width="6" height="6" fill="#ece43a"/><rect x="193.7" y="257.6" width="6" height="6" fill="#ece43a"/><rect x="155.9" y="264.3" width="6" height="6" fill="#ece43a"/><rect x="158.3" y="259" width="6" height="6" fill="#ece43a"/><rect x="135" y="286" width="6" height="6" fill="#ece43a"/><rect x="199.6" y="283.1" width="6" height="6" fill="#ece43a"/><rect x="365.1" y="274.1" width="6" height="6" fill="#f6f6f6"/><rect x="386.8" y="235.7" width="6" height="6" fill="#f6f6f6"/><rect x="316.1" y="285" width="6" height="6" fill="#f6f6f6"/><rect x="327.8" y="247.2" width="6" height="6" fill="#f6f6f6"/><rect x="353.2" y="259.4" width="6" height="6" fill="#f6f6f6"/><rect x="371" y="220.4" width="6" height="6" fill="#f6f6f6"/><rect x="311.1" y="276.9" width="6" height="6" fill="#f6f6f6"/><rect x="321.3" y="238.6" width="6" height="6" fill="#f6f6f6"/><rect x="339.4" y="247.3" width="6" height="6" fill="#f6f6f6"/><rect x="353.7" y="208.1" width="6" height="6" fill="#f6f6f6"/><rect x="304.7" y="269.8" width="6" height="6" fill="#f6f6f6"/><rect x="313.2" y="231.2" width="6" height="6" fill="#f6f6f6"/><rect x="324.4" y="237.7" width="6" height="6" fill="#f6f6f6"/><rect x="335.4" y="198.6" width="6" height="6" fill="#f6f6f6"/><rect x="297.1" y="264.1" width="6" height="6" fill="#f6f6f6"/><rect x="303.8" y="225.2" width="6" height="6" fill="#f6f6f6"/><rect x="308.6" y="230.5" width="6" height="6" fill="#f6f6f6"/><rect x="316.4" y="191.5" width="6" height="6" fill="#f6f6f6"/><rect x="288.7" y="259.6" width="6" height="6" fill="#f6f6f6"/><rect x="293.6" y="220.6" width="6" height="6" fill="#f6f6f6"/><rect x="292.2" y="225.7" width="6" height="6" fill="#f6f6f6"/><rect x="297" y="186.7" width="6" height="6" fill="#f6f6f6"/><rect x="279.6" y="256.5" width="6" height="6" fill="#f6f6f6"/><rect x="282.7" y="217.5" width="6" height="6" fill="#f6f6f6"/><rect x="275.5" y="223" width="6" height="6" fill="#f6f6f6"/><rect x="277.4" y="184.1" width="6" height="6" fill="#f6f6f6"/><rect x="270.2" y="254.8" width="6" height="6" fill="#f6f6f6"/><rect x="271.4" y="215.7" width="6" height="6" fill="#f6f6f6"/><rect x="258.7" y="222.5" width="6" height="6" fill="#f6f6f6"/><rect x="257.7" y="183.7" width="6" height="6" fill="#f6f6f6"/><rect x="260.6" y="254.5" width="6" height="6" fill="#f6f6f6"/><rect x="259.9" y="215.4" width="6" height="6" fill="#f6f6f6"/><rect x="241.9" y="224.2" width="6" height="6" fill="#f6f6f6"/><rect x="238.1" y="185.3" width="6" height="6" fill="#f6f6f6"/><rect x="251.1" y="255.6" width="6" height="6" fill="#f6f6f6"/><rect x="248.5" y="216.5" width="6" height="6" fill="#f6f6f6"/><rect x="225.3" y="228.1" width="6" height="6" fill="#f6f6f6"/><rect x="218.6" y="189.1" width="6" height="6" fill="#f6f6f6"/><rect x="241.8" y="258.1" width="6" height="6" fill="#f6f6f6"/><rect x="237.3" y="219.1" width="6" height="6" fill="#f6f6f6"/><rect x="209.1" y="234.3" width="6" height="6" fill="#f6f6f6"/><rect x="199.3" y="195.2" width="6" height="6" fill="#f6f6f6"/><rect x="233" y="261.9" width="6" height="6" fill="#f6f6f6"/><rect x="226.7" y="223" width="6" height="6" fill="#f6f6f6"/><rect x="193.7" y="242.8" width="6" height="6" fill="#f6f6f6"/><rect x="180.6" y="203.6" width="6" height="6" fill="#f6f6f6"/><rect x="225" y="267.1" width="6" height="6" fill="#f6f6f6"/><rect x="216.9" y="228.4" width="6" height="6" fill="#f6f6f6"/><rect x="179.3" y="253.8" width="6" height="6" fill="#f6f6f6"/><rect x="162.7" y="214.7" width="6" height="6" fill="#f6f6f6"/><rect x="218" y="273.6" width="6" height="6" fill="#f6f6f6"/><rect x="208.2" y="235.2" width="6" height="6" fill="#f6f6f6"/><rect x="166.4" y="267.3" width="6" height="6" fill="#f6f6f6"/><rect x="146.1" y="228.6" width="6" height="6" fill="#f6f6f6"/><rect x="212.3" y="281.3" width="6" height="6" fill="#f6f6f6"/><rect x="200.8" y="243.2" width="6" height="6" fill="#f6f6f6"/><rect x="155.5" y="283.5" width="6" height="6" fill="#f6f6f6"/><rect x="131.3" y="245.6" width="6" height="6" fill="#f6f6f6"/><rect x="208.1" y="290" width="6" height="6" fill="#f6f6f6"/><rect x="195.3" y="252.5" width="6" height="6" fill="#f6f6f6"/><rect x="147.5" y="302.3" width="6" height="6" fill="#f6f6f6"/><rect x="119.4" y="265.8" width="6" height="6" fill="#f6f6f6"/><rect x="205.8" y="299.5" width="6" height="6" fill="#f6f6f6"/><rect x="192" y="262.8" width="6" height="6" fill="#f6f6f6"/><rect x="374.7" y="291.5" width="6" height="6" fill="#d41818"/><rect x="400.2" y="254.1" width="6" height="6" fill="#d41818"/><rect x="319.4" y="294.1" width="6" height="6" fill="#d41818"/><rect x="332.3" y="256.9" width="6" height="6" fill="#d41818"/></g></svg><div class="t" style="left:42px;top:82px;color:#d8d8d8;font-size:10px;line-height:12px;">camera</div><svg style="position:absolute;left:496px;top:80px" width="401" height="352" viewBox="496 80 401 352"><rect x="496" y="80" width="401" height="352" fill="#000"/><g stroke-width="1"><line x1="501.5" y1="80" x2="501.5" y2="432" stroke="#5a5a5a"/><line x1="508.5" y1="80" x2="508.5" y2="432" stroke="#868686"/><line x1="514.5" y1="80" x2="514.5" y2="432" stroke="#5a5a5a"/><line x1="521.5" y1="80" x2="521.5" y2="432" stroke="#5a5a5a"/><line x1="528.5" y1="80" x2="528.5" y2="432" stroke="#5a5a5a"/><line x1="534.5" y1="80" x2="534.5" y2="432" stroke="#5a5a5a"/><line x1="541.5" y1="80" x2="541.5" y2="432" stroke="#5a5a5a"/><line x1="548.5" y1="80" x2="548.5" y2="432" stroke="#5a5a5a"/><line x1="555.5" y1="80" x2="555.5" y2="432" stroke="#5a5a5a"/><line x1="561.5" y1="80" x2="561.5" y2="432" stroke="#868686"/><line x1="568.5" y1="80" x2="568.5" y2="432" stroke="#5a5a5a"/><line x1="575.5" y1="80" x2="575.5" y2="432" stroke="#5a5a5a"/><line x1="581.5" y1="80" x2="581.5" y2="432" stroke="#5a5a5a"/><line x1="588.5" y1="80" x2="588.5" y2="432" stroke="#5a5a5a"/><line x1="595.5" y1="80" x2="595.5" y2="432" stroke="#5a5a5a"/><line x1="601.5" y1="80" x2="601.5" y2="432" stroke="#5a5a5a"/><line x1="608.5" y1="80" x2="608.5" y2="432" stroke="#5a5a5a"/><line x1="615.5" y1="80" x2="615.5" y2="432" stroke="#868686"/><line x1="622.5" y1="80" x2="622.5" y2="432" stroke="#5a5a5a"/><line x1="628.5" y1="80" x2="628.5" y2="432" stroke="#5a5a5a"/><line x1="635.5" y1="80" x2="635.5" y2="432" stroke="#5a5a5a"/><line x1="642.5" y1="80" x2="642.5" y2="432" stroke="#5a5a5a"/><line x1="648.5" y1="80" x2="648.5" y2="432" stroke="#5a5a5a"/><line x1="655.5" y1="80" x2="655.5" y2="432" stroke="#5a5a5a"/><line x1="662.5" y1="80" x2="662.5" y2="432" stroke="#5a5a5a"/><line x1="668.5" y1="80" x2="668.5" y2="432" stroke="#868686"/><line x1="675.5" y1="80" x2="675.5" y2="432" stroke="#5a5a5a"/><line x1="682.5" y1="80" x2="682.5" y2="432" stroke="#5a5a5a"/><line x1="689.5" y1="80" x2="689.5" y2="432" stroke="#5a5a5a"/><line x1="695.5" y1="80" x2="695.5" y2="432" stroke="#5a5a5a"/><line x1="702.5" y1="80" x2="702.5" y2="432" stroke="#5a5a5a"/><line x1="709.5" y1="80" x2="709.5" y2="432" stroke="#5a5a5a"/><line x1="715.5" y1="80" x2="715.5" y2="432" stroke="#5a5a5a"/><line x1="722.5" y1="80" x2="722.5" y2="432" stroke="#868686"/><line x1="729.5" y1="80" x2="729.5" y2="432" stroke="#5a5a5a"/><line x1="735.5" y1="80" x2="735.5" y2="432" stroke="#5a5a5a"/><line x1="742.5" y1="80" x2="742.5" y2="432" stroke="#5a5a5a"/><line x1="749.5" y1="80" x2="749.5" y2="432" stroke="#5a5a5a"/><line x1="756.5" y1="80" x2="756.5" y2="432" stroke="#5a5a5a"/><line x1="762.5" y1="80" x2="762.5" y2="432" stroke="#5a5a5a"/><line x1="769.5" y1="80" x2="769.5" y2="432" stroke="#5a5a5a"/><line x1="776.5" y1="80" x2="776.5" y2="432" stroke="#868686"/><line x1="782.5" y1="80" x2="782.5" y2="432" stroke="#5a5a5a"/><line x1="789.5" y1="80" x2="789.5" y2="432" stroke="#5a5a5a"/><line x1="796.5" y1="80" x2="796.5" y2="432" stroke="#5a5a5a"/><line x1="803.5" y1="80" x2="803.5" y2="432" stroke="#5a5a5a"/><line x1="809.5" y1="80" x2="809.5" y2="432" stroke="#5a5a5a"/><line x1="816.5" y1="80" x2="816.5" y2="432" stroke="#5a5a5a"/><line x1="823.5" y1="80" x2="823.5" y2="432" stroke="#5a5a5a"/><line x1="829.5" y1="80" x2="829.5" y2="432" stroke="#868686"/><line x1="836.5" y1="80" x2="836.5" y2="432" stroke="#5a5a5a"/><line x1="843.5" y1="80" x2="843.5" y2="432" stroke="#5a5a5a"/><line x1="849.5" y1="80" x2="849.5" y2="432" stroke="#5a5a5a"/><line x1="856.5" y1="80" x2="856.5" y2="432" stroke="#5a5a5a"/><line x1="863.5" y1="80" x2="863.5" y2="432" stroke="#5a5a5a"/><line x1="870.5" y1="80" x2="870.5" y2="432" stroke="#5a5a5a"/><line x1="876.5" y1="80" x2="876.5" y2="432" stroke="#5a5a5a"/><line x1="883.5" y1="80" x2="883.5" y2="432" stroke="#868686"/><line x1="890.5" y1="80" x2="890.5" y2="432" stroke="#5a5a5a"/><line x1="896.5" y1="80" x2="896.5" y2="432" stroke="#5a5a5a"/><line x1="496" y1="85.5" x2="897" y2="85.5" stroke="#5a5a5a"/><line x1="496" y1="91.5" x2="897" y2="91.5" stroke="#5a5a5a"/><line x1="496" y1="98.5" x2="897" y2="98.5" stroke="#5a5a5a"/><line x1="496" y1="105.5" x2="897" y2="105.5" stroke="#5a5a5a"/><line x1="496" y1="111.5" x2="897" y2="111.5" stroke="#5a5a5a"/><line x1="496" y1="118.5" x2="897" y2="118.5" stroke="#5a5a5a"/><line x1="496" y1="125.5" x2="897" y2="125.5" stroke="#868686"/><line x1="496" y1="132.5" x2="897" y2="132.5" stroke="#5a5a5a"/><line x1="496" y1="138.5" x2="897" y2="138.5" stroke="#5a5a5a"/><line x1="496" y1="145.5" x2="897" y2="145.5" stroke="#5a5a5a"/><line x1="496" y1="152.5" x2="897" y2="152.5" stroke="#5a5a5a"/><line x1="496" y1="158.5" x2="897" y2="158.5" stroke="#5a5a5a"/><line x1="496" y1="165.5" x2="897" y2="165.5" stroke="#5a5a5a"/><line x1="496" y1="172.5" x2="897" y2="172.5" stroke="#5a5a5a"/><line x1="496" y1="179.5" x2="897" y2="179.5" stroke="#868686"/><line x1="496" y1="185.5" x2="897" y2="185.5" stroke="#5a5a5a"/><line x1="496" y1="192.5" x2="897" y2="192.5" stroke="#5a5a5a"/><line x1="496" y1="199.5" x2="897" y2="199.5" stroke="#5a5a5a"/><line x1="496" y1="205.5" x2="897" y2="205.5" stroke="#5a5a5a"/><line x1="496" y1="212.5" x2="897" y2="212.5" stroke="#5a5a5a"/><line x1="496" y1="219.5" x2="897" y2="219.5" stroke="#5a5a5a"/><line x1="496" y1="225.5" x2="897" y2="225.5" stroke="#5a5a5a"/><line x1="496" y1="232.5" x2="897" y2="232.5" stroke="#868686"/><line x1="496" y1="239.5" x2="897" y2="239.5" stroke="#5a5a5a"/><line x1="496" y1="246.5" x2="897" y2="246.5" stroke="#5a5a5a"/><line x1="496" y1="252.5" x2="897" y2="252.5" stroke="#5a5a5a"/><line x1="496" y1="259.5" x2="897" y2="259.5" stroke="#5a5a5a"/><line x1="496" y1="266.5" x2="897" y2="266.5" stroke="#5a5a5a"/><line x1="496" y1="272.5" x2="897" y2="272.5" stroke="#5a5a5a"/><line x1="496" y1="279.5" x2="897" y2="279.5" stroke="#5a5a5a"/><line x1="496" y1="286.5" x2="897" y2="286.5" stroke="#868686"/><line x1="496" y1="292.5" x2="897" y2="292.5" stroke="#5a5a5a"/><line x1="496" y1="299.5" x2="897" y2="299.5" stroke="#5a5a5a"/><line x1="496" y1="306.5" x2="897" y2="306.5" stroke="#5a5a5a"/><line x1="496" y1="313.5" x2="897" y2="313.5" stroke="#5a5a5a"/><line x1="496" y1="319.5" x2="897" y2="319.5" stroke="#5a5a5a"/><line x1="496" y1="326.5" x2="897" y2="326.5" stroke="#5a5a5a"/><line x1="496" y1="333.5" x2="897" y2="333.5" stroke="#5a5a5a"/><line x1="496" y1="339.5" x2="897" y2="339.5" stroke="#868686"/><line x1="496" y1="346.5" x2="897" y2="346.5" stroke="#5a5a5a"/><line x1="496" y1="353.5" x2="897" y2="353.5" stroke="#5a5a5a"/><line x1="496" y1="359.5" x2="897" y2="359.5" stroke="#5a5a5a"/><line x1="496" y1="366.5" x2="897" y2="366.5" stroke="#5a5a5a"/><line x1="496" y1="373.5" x2="897" y2="373.5" stroke="#5a5a5a"/><line x1="496" y1="380.5" x2="897" y2="380.5" stroke="#5a5a5a"/><line x1="496" y1="386.5" x2="897" y2="386.5" stroke="#5a5a5a"/><line x1="496" y1="393.5" x2="897" y2="393.5" stroke="#868686"/><line x1="496" y1="400.5" x2="897" y2="400.5" stroke="#5a5a5a"/><line x1="496" y1="406.5" x2="897" y2="406.5" stroke="#5a5a5a"/><line x1="496" y1="413.5" x2="897" y2="413.5" stroke="#5a5a5a"/><line x1="496" y1="420.5" x2="897" y2="420.5" stroke="#5a5a5a"/><line x1="496" y1="427.5" x2="897" y2="427.5" stroke="#5a5a5a"/><line x1="776.5" y1="80" x2="776.5" y2="432" stroke="#2c4444" stroke-width="1"/></g><g stroke="#861818" stroke-width="1"><line x1="561.5" y1="178.7" x2="565.6" y2="220.5"/><line x1="668.8" y1="178.7" x2="670.8" y2="199.6"/><line x1="561.5" y1="178.7" x2="668.8" y2="178.7"/><line x1="565.6" y1="220.5" x2="670.8" y2="199.6"/><line x1="565.6" y1="220.5" x2="668.8" y2="178.7"/><line x1="565.6" y1="220.5" x2="577.8" y2="260.8"/><line x1="670.8" y1="199.6" x2="676.9" y2="219.7"/><line x1="577.8" y1="260.8" x2="676.9" y2="219.7"/><line x1="577.8" y1="260.8" x2="670.8" y2="199.6"/><line x1="577.8" y1="260.8" x2="597.7" y2="297.9"/><line x1="676.9" y1="219.7" x2="686.8" y2="238.3"/><line x1="597.7" y1="297.9" x2="686.8" y2="238.3"/><line x1="597.7" y1="297.9" x2="676.9" y2="219.7"/><line x1="597.7" y1="297.9" x2="624.3" y2="330.4"/><line x1="686.8" y1="238.3" x2="700.2" y2="254.5"/><line x1="624.3" y1="330.4" x2="700.2" y2="254.5"/><line x1="624.3" y1="330.4" x2="686.8" y2="238.3"/><line x1="624.3" y1="330.4" x2="656.8" y2="357"/><line x1="700.2" y1="254.5" x2="716.4" y2="267.9"/><line x1="656.8" y1="357" x2="716.4" y2="267.9"/><line x1="656.8" y1="357" x2="700.2" y2="254.5"/><line x1="656.8" y1="357" x2="693.9" y2="376.9"/><line x1="716.4" y1="267.9" x2="735" y2="277.8"/><line x1="693.9" y1="376.9" x2="735" y2="277.8"/><line x1="693.9" y1="376.9" x2="716.4" y2="267.9"/><line x1="693.9" y1="376.9" x2="734.2" y2="389.1"/><line x1="735" y1="277.8" x2="755.1" y2="283.9"/><line x1="734.2" y1="389.1" x2="755.1" y2="283.9"/><line x1="734.2" y1="389.1" x2="735" y2="277.8"/><line x1="734.2" y1="389.1" x2="776" y2="393.2"/><line x1="755.1" y1="283.9" x2="776" y2="285.9"/><line x1="776" y1="393.2" x2="776" y2="285.9"/><line x1="776" y1="393.2" x2="755.1" y2="283.9"/><line x1="776" y1="393.2" x2="817.8" y2="389.1"/><line x1="776" y1="285.9" x2="796.9" y2="283.9"/><line x1="817.8" y1="389.1" x2="796.9" y2="283.9"/><line x1="817.8" y1="389.1" x2="776" y2="285.9"/><line x1="817.8" y1="389.1" x2="858.1" y2="376.9"/><line x1="796.9" y1="283.9" x2="817" y2="277.8"/><line x1="858.1" y1="376.9" x2="817" y2="277.8"/><line x1="858.1" y1="376.9" x2="796.9" y2="283.9"/><line x1="858.1" y1="376.9" x2="895.2" y2="357"/><line x1="817" y1="277.8" x2="835.6" y2="267.9"/><line x1="895.2" y1="357" x2="835.6" y2="267.9"/><line x1="895.2" y1="357" x2="817" y2="277.8"/><line x1="895.2" y1="357" x2="927.7" y2="330.4"/><line x1="835.6" y1="267.9" x2="851.8" y2="254.5"/><line x1="927.7" y1="330.4" x2="851.8" y2="254.5"/><line x1="927.7" y1="330.4" x2="835.6" y2="267.9"/><line x1="927.7" y1="330.4" x2="954.3" y2="297.9"/><line x1="851.8" y1="254.5" x2="865.2" y2="238.3"/><line x1="954.3" y1="297.9" x2="865.2" y2="238.3"/><line x1="954.3" y1="297.9" x2="851.8" y2="254.5"/><line x1="954.3" y1="297.9" x2="974.2" y2="260.8"/><line x1="865.2" y1="238.3" x2="875.1" y2="219.7"/><line x1="974.2" y1="260.8" x2="875.1" y2="219.7"/><line x1="974.2" y1="260.8" x2="865.2" y2="238.3"/><line x1="974.2" y1="260.8" x2="986.4" y2="220.5"/><line x1="875.1" y1="219.7" x2="881.2" y2="199.6"/><line x1="986.4" y1="220.5" x2="881.2" y2="199.6"/><line x1="986.4" y1="220.5" x2="875.1" y2="219.7"/><line x1="986.4" y1="220.5" x2="990.5" y2="178.7"/><line x1="881.2" y1="199.6" x2="883.2" y2="178.7"/><line x1="990.5" y1="178.7" x2="883.2" y2="178.7"/><line x1="990.5" y1="178.7" x2="881.2" y2="199.6"/></g><g stroke="#3a2a00" stroke-width="0.5" stroke-opacity="0.6"><rect x="561.1" y="197.1" width="5" height="5" fill="#ece43a"/><rect x="667.3" y="186.7" width="5" height="5" fill="#ece43a"/><rect x="612.6" y="176.2" width="5" height="5" fill="#ece43a"/><rect x="615.7" y="207.6" width="5" height="5" fill="#ece43a"/><rect x="614.7" y="197.1" width="5" height="5" fill="#ece43a"/><rect x="569.2" y="238.2" width="5" height="5" fill="#ece43a"/><rect x="671.4" y="207.2" width="5" height="5" fill="#ece43a"/><rect x="624.9" y="237.8" width="5" height="5" fill="#ece43a"/><rect x="621.8" y="227.7" width="5" height="5" fill="#ece43a"/><rect x="585.2" y="276.8" width="5" height="5" fill="#ece43a"/><rect x="679.4" y="226.5" width="5" height="5" fill="#ece43a"/><rect x="639.7" y="265.6" width="5" height="5" fill="#ece43a"/><rect x="634.8" y="256.3" width="5" height="5" fill="#ece43a"/><rect x="608.5" y="311.6" width="5" height="5" fill="#ece43a"/><rect x="691" y="243.9" width="5" height="5" fill="#ece43a"/><rect x="659.7" y="290" width="5" height="5" fill="#ece43a"/><rect x="653.1" y="281.8" width="5" height="5" fill="#ece43a"/><rect x="638.1" y="341.2" width="5" height="5" fill="#ece43a"/><rect x="705.8" y="258.7" width="5" height="5" fill="#ece43a"/><rect x="684.1" y="310" width="5" height="5" fill="#ece43a"/><rect x="676" y="303.3" width="5" height="5" fill="#ece43a"/><rect x="672.9" y="364.5" width="5" height="5" fill="#ece43a"/><rect x="723.2" y="270.3" width="5" height="5" fill="#ece43a"/><rect x="711.9" y="324.8" width="5" height="5" fill="#ece43a"/><rect x="702.7" y="319.9" width="5" height="5" fill="#ece43a"/><rect x="711.5" y="380.5" width="5" height="5" fill="#ece43a"/><rect x="742.5" y="278.3" width="5" height="5" fill="#ece43a"/><rect x="742.1" y="334" width="5" height="5" fill="#ece43a"/><rect x="732.1" y="330.9" width="5" height="5" fill="#ece43a"/><rect x="752.6" y="388.6" width="5" height="5" fill="#ece43a"/><rect x="763" y="282.4" width="5" height="5" fill="#ece43a"/><rect x="773.5" y="337.1" width="5" height="5" fill="#ece43a"/><rect x="763" y="336" width="5" height="5" fill="#ece43a"/><rect x="794.4" y="388.6" width="5" height="5" fill="#ece43a"/><rect x="784" y="282.4" width="5" height="5" fill="#ece43a"/><rect x="804.9" y="334" width="5" height="5" fill="#ece43a"/><rect x="794.4" y="335" width="5" height="5" fill="#ece43a"/><rect x="835.5" y="380.5" width="5" height="5" fill="#ece43a"/><rect x="804.5" y="278.3" width="5" height="5" fill="#ece43a"/><rect x="835.1" y="324.8" width="5" height="5" fill="#ece43a"/><rect x="825" y="327.9" width="5" height="5" fill="#ece43a"/><rect x="874.1" y="364.5" width="5" height="5" fill="#ece43a"/><rect x="823.8" y="270.3" width="5" height="5" fill="#ece43a"/><rect x="862.9" y="310" width="5" height="5" fill="#ece43a"/><rect x="853.6" y="314.9" width="5" height="5" fill="#ece43a"/><rect x="908.9" y="341.2" width="5" height="5" fill="#ece43a"/><rect x="841.2" y="258.7" width="5" height="5" fill="#ece43a"/><rect x="887.3" y="290" width="5" height="5" fill="#ece43a"/><rect x="879.1" y="296.6" width="5" height="5" fill="#ece43a"/><rect x="938.5" y="311.6" width="5" height="5" fill="#ece43a"/><rect x="856" y="243.9" width="5" height="5" fill="#ece43a"/><rect x="907.3" y="265.6" width="5" height="5" fill="#ece43a"/><rect x="900.6" y="273.7" width="5" height="5" fill="#ece43a"/><rect x="961.8" y="276.8" width="5" height="5" fill="#ece43a"/><rect x="867.6" y="226.5" width="5" height="5" fill="#ece43a"/><rect x="922.1" y="237.8" width="5" height="5" fill="#ece43a"/><rect x="917.2" y="247" width="5" height="5" fill="#ece43a"/><rect x="977.8" y="238.2" width="5" height="5" fill="#ece43a"/><rect x="875.6" y="207.2" width="5" height="5" fill="#ece43a"/><rect x="931.3" y="207.6" width="5" height="5" fill="#ece43a"/><rect x="928.2" y="217.6" width="5" height="5" fill="#ece43a"/><rect x="985.9" y="197.1" width="5" height="5" fill="#ece43a"/><rect x="879.7" y="186.7" width="5" height="5" fill="#ece43a"/><rect x="934.4" y="176.2" width="5" height="5" fill="#ece43a"/><rect x="933.3" y="186.7" width="5" height="5" fill="#ece43a"/><rect x="563.1" y="218" width="5" height="5" fill="#f6f6f6"/><rect x="668.3" y="197.1" width="5" height="5" fill="#f6f6f6"/><rect x="575.3" y="258.3" width="5" height="5" fill="#f6f6f6"/><rect x="674.4" y="217.2" width="5" height="5" fill="#f6f6f6"/><rect x="595.2" y="295.4" width="5" height="5" fill="#f6f6f6"/><rect x="684.3" y="235.8" width="5" height="5" fill="#f6f6f6"/><rect x="621.8" y="327.9" width="5" height="5" fill="#f6f6f6"/><rect x="697.7" y="252" width="5" height="5" fill="#f6f6f6"/><rect x="654.3" y="354.5" width="5" height="5" fill="#f6f6f6"/><rect x="713.9" y="265.4" width="5" height="5" fill="#f6f6f6"/><rect x="691.4" y="374.4" width="5" height="5" fill="#f6f6f6"/><rect x="732.5" y="275.3" width="5" height="5" fill="#f6f6f6"/><rect x="731.7" y="386.6" width="5" height="5" fill="#f6f6f6"/><rect x="752.6" y="281.4" width="5" height="5" fill="#f6f6f6"/><rect x="773.5" y="390.7" width="5" height="5" fill="#f6f6f6"/><rect x="773.5" y="283.4" width="5" height="5" fill="#f6f6f6"/><rect x="815.3" y="386.6" width="5" height="5" fill="#f6f6f6"/><rect x="794.4" y="281.4" width="5" height="5" fill="#f6f6f6"/><rect x="855.6" y="374.4" width="5" height="5" fill="#f6f6f6"/><rect x="814.5" y="275.3" width="5" height="5" fill="#f6f6f6"/><rect x="892.7" y="354.5" width="5" height="5" fill="#f6f6f6"/><rect x="833.1" y="265.4" width="5" height="5" fill="#f6f6f6"/><rect x="925.2" y="327.9" width="5" height="5" fill="#f6f6f6"/><rect x="849.3" y="252" width="5" height="5" fill="#f6f6f6"/><rect x="951.8" y="295.4" width="5" height="5" fill="#f6f6f6"/><rect x="862.7" y="235.8" width="5" height="5" fill="#f6f6f6"/><rect x="971.7" y="258.3" width="5" height="5" fill="#f6f6f6"/><rect x="872.6" y="217.2" width="5" height="5" fill="#f6f6f6"/><rect x="983.9" y="218" width="5" height="5" fill="#f6f6f6"/><rect x="878.7" y="197.1" width="5" height="5" fill="#f6f6f6"/><rect x="988" y="176.2" width="5" height="5" fill="#f6f6f6"/><rect x="880.7" y="176.2" width="5" height="5" fill="#f6f6f6"/><rect x="559" y="176.2" width="5" height="5" fill="#e01818"/><rect x="666.3" y="176.2" width="5" height="5" fill="#e01818"/></g></svg><div style="position:absolute;left:897px;top:80px;width:14px;height:352px;background:#fbfbf8;"></div><svg style="position:absolute;left:897px;top:80px" width="14" height="352"><rect x="1" y="0.5" width="12" height="12" rx="1.5" fill="#c7d6f8" stroke="#dbe5fb"/><path d="M4,8 L7,5 L10,8" fill="none" stroke="#4d6185" stroke-width="1.6"/><rect x="1" y="339" width="12" height="12" rx="1.5" fill="#c7d6f8" stroke="#dbe5fb"/><path d="M4,344 L7,347 L10,344" fill="none" stroke="#4d6185" stroke-width="1.6"/><rect x="1.5" y="173" width="11" height="6" rx="1.5" fill="#d4e0fa" stroke="#a8bde8" stroke-width="0.8"/></svg><div style="position:absolute;left:496px;top:432px;width:401px;height:13px;background:#fbfbf8;"></div><svg style="position:absolute;left:496px;top:432px" width="401" height="13"><rect x="0.5" y="1" width="13" height="11" rx="1.5" fill="#c7d6f8" stroke="#dbe5fb"/><path d="M8,3.5 L5,6.5 L8,9.5" fill="none" stroke="#4d6185" stroke-width="1.6"/><rect x="387.5" y="1" width="13" height="11" rx="1.5" fill="#c7d6f8" stroke="#dbe5fb"/><path d="M393,3.5 L396,6.5 L393,9.5" fill="none" stroke="#4d6185" stroke-width="1.6"/><rect x="198.5" y="1.5" width="6" height="10" rx="1.5" fill="#d4e0fa" stroke="#a8bde8" stroke-width="0.8"/></svg><div style="position:absolute;left:897px;top:432px;width:14px;height:13px;background:#f2f0e8;"></div><svg style="position:absolute;left:40px;top:449px" width="439" height="293" viewBox="40 449 439 293"><rect x="40" y="449" width="439" height="293" fill="#000"/><g stroke-width="1"><line x1="44.5" y1="449" x2="44.5" y2="742" stroke="#5a5a5a"/><line x1="52.5" y1="449" x2="52.5" y2="742" stroke="#5a5a5a"/><line x1="60.5" y1="449" x2="60.5" y2="742" stroke="#5a5a5a"/><line x1="68.5" y1="449" x2="68.5" y2="742" stroke="#5a5a5a"/><line x1="76.5" y1="449" x2="76.5" y2="742" stroke="#868686"/><line x1="84.5" y1="449" x2="84.5" y2="742" stroke="#5a5a5a"/><line x1="92.5" y1="449" x2="92.5" y2="742" stroke="#5a5a5a"/><line x1="100.5" y1="449" x2="100.5" y2="742" stroke="#5a5a5a"/><line x1="108.5" y1="449" x2="108.5" y2="742" stroke="#5a5a5a"/><line x1="116.5" y1="449" x2="116.5" y2="742" stroke="#5a5a5a"/><line x1="124.5" y1="449" x2="124.5" y2="742" stroke="#5a5a5a"/><line x1="132.5" y1="449" x2="132.5" y2="742" stroke="#5a5a5a"/><line x1="140.5" y1="449" x2="140.5" y2="742" stroke="#868686"/><line x1="149.5" y1="449" x2="149.5" y2="742" stroke="#5a5a5a"/><line x1="157.5" y1="449" x2="157.5" y2="742" stroke="#5a5a5a"/><line x1="165.5" y1="449" x2="165.5" y2="742" stroke="#5a5a5a"/><line x1="173.5" y1="449" x2="173.5" y2="742" stroke="#5a5a5a"/><line x1="181.5" y1="449" x2="181.5" y2="742" stroke="#5a5a5a"/><line x1="189.5" y1="449" x2="189.5" y2="742" stroke="#5a5a5a"/><line x1="197.5" y1="449" x2="197.5" y2="742" stroke="#5a5a5a"/><line x1="205.5" y1="449" x2="205.5" y2="742" stroke="#868686"/><line x1="213.5" y1="449" x2="213.5" y2="742" stroke="#5a5a5a"/><line x1="221.5" y1="449" x2="221.5" y2="742" stroke="#5a5a5a"/><line x1="229.5" y1="449" x2="229.5" y2="742" stroke="#5a5a5a"/><line x1="237.5" y1="449" x2="237.5" y2="742" stroke="#5a5a5a"/><line x1="245.5" y1="449" x2="245.5" y2="742" stroke="#5a5a5a"/><line x1="253.5" y1="449" x2="253.5" y2="742" stroke="#5a5a5a"/><line x1="261.5" y1="449" x2="261.5" y2="742" stroke="#5a5a5a"/><line x1="269.5" y1="449" x2="269.5" y2="742" stroke="#868686"/><line x1="277.5" y1="449" x2="277.5" y2="742" stroke="#5a5a5a"/><line x1="286.5" y1="449" x2="286.5" y2="742" stroke="#5a5a5a"/><line x1="294.5" y1="449" x2="294.5" y2="742" stroke="#5a5a5a"/><line x1="302.5" y1="449" x2="302.5" y2="742" stroke="#5a5a5a"/><line x1="310.5" y1="449" x2="310.5" y2="742" stroke="#5a5a5a"/><line x1="318.5" y1="449" x2="318.5" y2="742" stroke="#5a5a5a"/><line x1="326.5" y1="449" x2="326.5" y2="742" stroke="#5a5a5a"/><line x1="334.5" y1="449" x2="334.5" y2="742" stroke="#868686"/><line x1="342.5" y1="449" x2="342.5" y2="742" stroke="#5a5a5a"/><line x1="350.5" y1="449" x2="350.5" y2="742" stroke="#5a5a5a"/><line x1="358.5" y1="449" x2="358.5" y2="742" stroke="#5a5a5a"/><line x1="366.5" y1="449" x2="366.5" y2="742" stroke="#5a5a5a"/><line x1="374.5" y1="449" x2="374.5" y2="742" stroke="#5a5a5a"/><line x1="382.5" y1="449" x2="382.5" y2="742" stroke="#5a5a5a"/><line x1="390.5" y1="449" x2="390.5" y2="742" stroke="#5a5a5a"/><line x1="398.5" y1="449" x2="398.5" y2="742" stroke="#868686"/><line x1="406.5" y1="449" x2="406.5" y2="742" stroke="#5a5a5a"/><line x1="415.5" y1="449" x2="415.5" y2="742" stroke="#5a5a5a"/><line x1="423.5" y1="449" x2="423.5" y2="742" stroke="#5a5a5a"/><line x1="431.5" y1="449" x2="431.5" y2="742" stroke="#5a5a5a"/><line x1="439.5" y1="449" x2="439.5" y2="742" stroke="#5a5a5a"/><line x1="447.5" y1="449" x2="447.5" y2="742" stroke="#5a5a5a"/><line x1="455.5" y1="449" x2="455.5" y2="742" stroke="#5a5a5a"/><line x1="463.5" y1="449" x2="463.5" y2="742" stroke="#868686"/><line x1="471.5" y1="449" x2="471.5" y2="742" stroke="#5a5a5a"/><line x1="40" y1="452.5" x2="479" y2="452.5" stroke="#868686"/><line x1="40" y1="460.5" x2="479" y2="460.5" stroke="#5a5a5a"/><line x1="40" y1="468.5" x2="479" y2="468.5" stroke="#5a5a5a"/><line x1="40" y1="476.5" x2="479" y2="476.5" stroke="#5a5a5a"/><line x1="40" y1="484.5" x2="479" y2="484.5" stroke="#5a5a5a"/><line x1="40" y1="492.5" x2="479" y2="492.5" stroke="#5a5a5a"/><line x1="40" y1="500.5" x2="479" y2="500.5" stroke="#5a5a5a"/><line x1="40" y1="508.5" x2="479" y2="508.5" stroke="#5a5a5a"/><line x1="40" y1="516.5" x2="479" y2="516.5" stroke="#868686"/><line x1="40" y1="524.5" x2="479" y2="524.5" stroke="#5a5a5a"/><line x1="40" y1="532.5" x2="479" y2="532.5" stroke="#5a5a5a"/><line x1="40" y1="540.5" x2="479" y2="540.5" stroke="#5a5a5a"/><line x1="40" y1="548.5" x2="479" y2="548.5" stroke="#5a5a5a"/><line x1="40" y1="556.5" x2="479" y2="556.5" stroke="#5a5a5a"/><line x1="40" y1="564.5" x2="479" y2="564.5" stroke="#5a5a5a"/><line x1="40" y1="572.5" x2="479" y2="572.5" stroke="#5a5a5a"/><line x1="40" y1="580.5" x2="479" y2="580.5" stroke="#868686"/><line x1="40" y1="588.5" x2="479" y2="588.5" stroke="#5a5a5a"/><line x1="40" y1="596.5" x2="479" y2="596.5" stroke="#5a5a5a"/><line x1="40" y1="605.5" x2="479" y2="605.5" stroke="#5a5a5a"/><line x1="40" y1="613.5" x2="479" y2="613.5" stroke="#5a5a5a"/><line x1="40" y1="621.5" x2="479" y2="621.5" stroke="#5a5a5a"/><line x1="40" y1="629.5" x2="479" y2="629.5" stroke="#5a5a5a"/><line x1="40" y1="637.5" x2="479" y2="637.5" stroke="#5a5a5a"/><line x1="40" y1="645.5" x2="479" y2="645.5" stroke="#868686"/><line x1="40" y1="653.5" x2="479" y2="653.5" stroke="#5a5a5a"/><line x1="40" y1="661.5" x2="479" y2="661.5" stroke="#5a5a5a"/><line x1="40" y1="669.5" x2="479" y2="669.5" stroke="#5a5a5a"/><line x1="40" y1="677.5" x2="479" y2="677.5" stroke="#5a5a5a"/><line x1="40" y1="685.5" x2="479" y2="685.5" stroke="#5a5a5a"/><line x1="40" y1="693.5" x2="479" y2="693.5" stroke="#5a5a5a"/><line x1="40" y1="701.5" x2="479" y2="701.5" stroke="#5a5a5a"/><line x1="40" y1="709.5" x2="479" y2="709.5" stroke="#868686"/><line x1="40" y1="717.5" x2="479" y2="717.5" stroke="#5a5a5a"/><line x1="40" y1="725.5" x2="479" y2="725.5" stroke="#5a5a5a"/><line x1="40" y1="733.5" x2="479" y2="733.5" stroke="#5a5a5a"/><line x1="40" y1="741.5" x2="479" y2="741.5" stroke="#5a5a5a"/></g><g stroke="#8c1616" stroke-width="1.3"><line x1="334.2" y1="645.2" x2="283.9" y2="645.2"/><line x1="334.2" y1="645.2" x2="309" y2="645.2"/><line x1="334.2" y1="645.2" x2="334.2" y2="645.2"/><line x1="283.9" y1="645.2" x2="309" y2="645.2"/><line x1="334.2" y1="516.6" x2="283.9" y2="516.6"/><line x1="334.2" y1="516.6" x2="309" y2="516.6"/><line x1="334.2" y1="516.6" x2="334.2" y2="516.6"/><line x1="283.9" y1="516.6" x2="309" y2="516.6"/><line x1="334.2" y1="645.2" x2="334.2" y2="516.6"/><line x1="283.9" y1="645.2" x2="283.9" y2="516.6"/><line x1="309" y1="645.2" x2="309" y2="516.6"/><line x1="283.9" y1="645.2" x2="235.5" y2="645.2"/><line x1="309" y1="645.2" x2="284.8" y2="645.2"/><line x1="235.5" y1="645.2" x2="284.8" y2="645.2"/><line x1="235.5" y1="645.2" x2="309" y2="645.2"/><line x1="283.9" y1="516.6" x2="235.5" y2="516.6"/><line x1="309" y1="516.6" x2="284.8" y2="516.6"/><line x1="235.5" y1="516.6" x2="284.8" y2="516.6"/><line x1="235.5" y1="516.6" x2="309" y2="516.6"/><line x1="235.5" y1="645.2" x2="235.5" y2="516.6"/><line x1="284.8" y1="645.2" x2="284.8" y2="516.6"/><line x1="235.5" y1="645.2" x2="190.9" y2="645.2"/><line x1="284.8" y1="645.2" x2="262.6" y2="645.2"/><line x1="190.9" y1="645.2" x2="262.6" y2="645.2"/><line x1="190.9" y1="645.2" x2="284.8" y2="645.2"/><line x1="235.5" y1="516.6" x2="190.9" y2="516.6"/><line x1="284.8" y1="516.6" x2="262.6" y2="516.6"/><line x1="190.9" y1="516.6" x2="262.6" y2="516.6"/><line x1="190.9" y1="516.6" x2="284.8" y2="516.6"/><line x1="190.9" y1="645.2" x2="190.9" y2="516.6"/><line x1="262.6" y1="645.2" x2="262.6" y2="516.6"/><line x1="190.9" y1="645.2" x2="151.8" y2="645.2"/><line x1="262.6" y1="645.2" x2="243" y2="645.2"/><line x1="151.8" y1="645.2" x2="243" y2="645.2"/><line x1="151.8" y1="645.2" x2="262.6" y2="645.2"/><line x1="190.9" y1="516.6" x2="151.8" y2="516.6"/><line x1="262.6" y1="516.6" x2="243" y2="516.6"/><line x1="151.8" y1="516.6" x2="243" y2="516.6"/><line x1="151.8" y1="516.6" x2="262.6" y2="516.6"/><line x1="151.8" y1="645.2" x2="151.8" y2="516.6"/><line x1="243" y1="645.2" x2="243" y2="516.6"/><line x1="151.8" y1="645.2" x2="119.7" y2="645.2"/><line x1="243" y1="645.2" x2="227" y2="645.2"/><line x1="119.7" y1="645.2" x2="227" y2="645.2"/><line x1="119.7" y1="645.2" x2="243" y2="645.2"/><line x1="151.8" y1="516.6" x2="119.7" y2="516.6"/><line x1="243" y1="516.6" x2="227" y2="516.6"/><line x1="119.7" y1="516.6" x2="227" y2="516.6"/><line x1="119.7" y1="516.6" x2="243" y2="516.6"/><line x1="119.7" y1="645.2" x2="119.7" y2="516.6"/><line x1="227" y1="645.2" x2="227" y2="516.6"/><line x1="119.7" y1="645.2" x2="95.9" y2="645.2"/><line x1="227" y1="645.2" x2="215.1" y2="645.2"/><line x1="95.9" y1="645.2" x2="215.1" y2="645.2"/><line x1="95.9" y1="645.2" x2="227" y2="645.2"/><line x1="119.7" y1="516.6" x2="95.9" y2="516.6"/><line x1="227" y1="516.6" x2="215.1" y2="516.6"/><line x1="95.9" y1="516.6" x2="215.1" y2="516.6"/><line x1="95.9" y1="516.6" x2="227" y2="516.6"/><line x1="95.9" y1="645.2" x2="95.9" y2="516.6"/><line x1="215.1" y1="645.2" x2="215.1" y2="516.6"/><line x1="95.9" y1="645.2" x2="81.2" y2="645.2"/><line x1="215.1" y1="645.2" x2="207.7" y2="645.2"/><line x1="81.2" y1="645.2" x2="207.7" y2="645.2"/><line x1="81.2" y1="645.2" x2="215.1" y2="645.2"/><line x1="95.9" y1="516.6" x2="81.2" y2="516.6"/><line x1="215.1" y1="516.6" x2="207.7" y2="516.6"/><line x1="81.2" y1="516.6" x2="207.7" y2="516.6"/><line x1="81.2" y1="516.6" x2="215.1" y2="516.6"/><line x1="81.2" y1="645.2" x2="81.2" y2="516.6"/><line x1="207.7" y1="645.2" x2="207.7" y2="516.6"/><line x1="81.2" y1="645.2" x2="76.3" y2="645.2"/><line x1="207.7" y1="645.2" x2="205.2" y2="645.2"/><line x1="76.3" y1="645.2" x2="205.2" y2="645.2"/><line x1="76.3" y1="645.2" x2="207.7" y2="645.2"/><line x1="81.2" y1="516.6" x2="76.3" y2="516.6"/><line x1="207.7" y1="516.6" x2="205.2" y2="516.6"/><line x1="76.3" y1="516.6" x2="205.2" y2="516.6"/><line x1="76.3" y1="516.6" x2="207.7" y2="516.6"/><line x1="76.3" y1="645.2" x2="76.3" y2="516.6"/><line x1="205.2" y1="645.2" x2="205.2" y2="516.6"/><line x1="81.2" y1="645.2" x2="205.2" y2="645.2"/><line x1="81.2" y1="516.6" x2="205.2" y2="516.6"/><line x1="95.9" y1="645.2" x2="207.7" y2="645.2"/><line x1="95.9" y1="516.6" x2="207.7" y2="516.6"/><line x1="119.7" y1="645.2" x2="215.1" y2="645.2"/><line x1="119.7" y1="516.6" x2="215.1" y2="516.6"/><line x1="151.8" y1="645.2" x2="227" y2="645.2"/><line x1="151.8" y1="516.6" x2="227" y2="516.6"/><line x1="190.9" y1="645.2" x2="243" y2="645.2"/><line x1="190.9" y1="516.6" x2="243" y2="516.6"/><line x1="235.5" y1="645.2" x2="262.6" y2="645.2"/><line x1="235.5" y1="516.6" x2="262.6" y2="516.6"/><line x1="283.9" y1="645.2" x2="284.8" y2="645.2"/><line x1="283.9" y1="516.6" x2="284.8" y2="516.6"/></g><g stroke="#3a2a00" stroke-width="0.5" stroke-opacity="0.6"><rect x="306.5" y="642.7" width="5" height="5" fill="#ece43a"/><rect x="319.1" y="642.7" width="5" height="5" fill="#ece43a"/><rect x="331.7" y="642.7" width="5" height="5" fill="#ece43a"/><rect x="294" y="642.7" width="5" height="5" fill="#ece43a"/><rect x="306.5" y="642.7" width="5" height="5" fill="#ece43a"/><rect x="306.5" y="514.1" width="5" height="5" fill="#ece43a"/><rect x="319.1" y="514.1" width="5" height="5" fill="#ece43a"/><rect x="331.7" y="514.1" width="5" height="5" fill="#ece43a"/><rect x="294" y="514.1" width="5" height="5" fill="#ece43a"/><rect x="306.5" y="514.1" width="5" height="5" fill="#ece43a"/><rect x="331.7" y="578.4" width="5" height="5" fill="#ece43a"/><rect x="331.7" y="578.4" width="5" height="5" fill="#ece43a"/><rect x="281.4" y="578.4" width="5" height="5" fill="#ece43a"/><rect x="306.5" y="578.4" width="5" height="5" fill="#ece43a"/><rect x="257.2" y="642.7" width="5" height="5" fill="#ece43a"/><rect x="294.4" y="642.7" width="5" height="5" fill="#ece43a"/><rect x="257.7" y="642.7" width="5" height="5" fill="#ece43a"/><rect x="269.8" y="642.7" width="5" height="5" fill="#ece43a"/><rect x="257.2" y="514.1" width="5" height="5" fill="#ece43a"/><rect x="294.4" y="514.1" width="5" height="5" fill="#ece43a"/><rect x="257.7" y="514.1" width="5" height="5" fill="#ece43a"/><rect x="269.8" y="514.1" width="5" height="5" fill="#ece43a"/><rect x="233" y="578.4" width="5" height="5" fill="#ece43a"/><rect x="282.3" y="578.4" width="5" height="5" fill="#ece43a"/><rect x="210.7" y="642.7" width="5" height="5" fill="#ece43a"/><rect x="271.2" y="642.7" width="5" height="5" fill="#ece43a"/><rect x="224.2" y="642.7" width="5" height="5" fill="#ece43a"/><rect x="235.4" y="642.7" width="5" height="5" fill="#ece43a"/><rect x="210.7" y="514.1" width="5" height="5" fill="#ece43a"/><rect x="271.2" y="514.1" width="5" height="5" fill="#ece43a"/><rect x="224.2" y="514.1" width="5" height="5" fill="#ece43a"/><rect x="235.4" y="514.1" width="5" height="5" fill="#ece43a"/><rect x="188.4" y="578.4" width="5" height="5" fill="#ece43a"/><rect x="260.1" y="578.4" width="5" height="5" fill="#ece43a"/><rect x="168.9" y="642.7" width="5" height="5" fill="#ece43a"/><rect x="250.3" y="642.7" width="5" height="5" fill="#ece43a"/><rect x="194.9" y="642.7" width="5" height="5" fill="#ece43a"/><rect x="204.7" y="642.7" width="5" height="5" fill="#ece43a"/><rect x="168.9" y="514.1" width="5" height="5" fill="#ece43a"/><rect x="250.3" y="514.1" width="5" height="5" fill="#ece43a"/><rect x="194.9" y="514.1" width="5" height="5" fill="#ece43a"/><rect x="204.7" y="514.1" width="5" height="5" fill="#ece43a"/><rect x="149.3" y="578.4" width="5" height="5" fill="#ece43a"/><rect x="240.5" y="578.4" width="5" height="5" fill="#ece43a"/><rect x="133.3" y="642.7" width="5" height="5" fill="#ece43a"/><rect x="232.5" y="642.7" width="5" height="5" fill="#ece43a"/><rect x="170.9" y="642.7" width="5" height="5" fill="#ece43a"/><rect x="178.9" y="642.7" width="5" height="5" fill="#ece43a"/><rect x="133.3" y="514.1" width="5" height="5" fill="#ece43a"/><rect x="232.5" y="514.1" width="5" height="5" fill="#ece43a"/><rect x="170.9" y="514.1" width="5" height="5" fill="#ece43a"/><rect x="178.9" y="514.1" width="5" height="5" fill="#ece43a"/><rect x="117.2" y="578.4" width="5" height="5" fill="#ece43a"/><rect x="224.5" y="578.4" width="5" height="5" fill="#ece43a"/><rect x="105.3" y="642.7" width="5" height="5" fill="#ece43a"/><rect x="218.5" y="642.7" width="5" height="5" fill="#ece43a"/><rect x="153" y="642.7" width="5" height="5" fill="#ece43a"/><rect x="158.9" y="642.7" width="5" height="5" fill="#ece43a"/><rect x="105.3" y="514.1" width="5" height="5" fill="#ece43a"/><rect x="218.5" y="514.1" width="5" height="5" fill="#ece43a"/><rect x="153" y="514.1" width="5" height="5" fill="#ece43a"/><rect x="158.9" y="514.1" width="5" height="5" fill="#ece43a"/><rect x="93.4" y="578.4" width="5" height="5" fill="#ece43a"/><rect x="212.6" y="578.4" width="5" height="5" fill="#ece43a"/><rect x="86.1" y="642.7" width="5" height="5" fill="#ece43a"/><rect x="208.9" y="642.7" width="5" height="5" fill="#ece43a"/><rect x="142" y="642.7" width="5" height="5" fill="#ece43a"/><rect x="145.6" y="642.7" width="5" height="5" fill="#ece43a"/><rect x="86.1" y="514.1" width="5" height="5" fill="#ece43a"/><rect x="208.9" y="514.1" width="5" height="5" fill="#ece43a"/><rect x="142" y="514.1" width="5" height="5" fill="#ece43a"/><rect x="145.6" y="514.1" width="5" height="5" fill="#ece43a"/><rect x="78.7" y="578.4" width="5" height="5" fill="#ece43a"/><rect x="205.2" y="578.4" width="5" height="5" fill="#ece43a"/><rect x="76.3" y="642.7" width="5" height="5" fill="#ece43a"/><rect x="204" y="642.7" width="5" height="5" fill="#ece43a"/><rect x="138.3" y="642.7" width="5" height="5" fill="#ece43a"/><rect x="139.5" y="642.7" width="5" height="5" fill="#ece43a"/><rect x="76.3" y="514.1" width="5" height="5" fill="#ece43a"/><rect x="204" y="514.1" width="5" height="5" fill="#ece43a"/><rect x="138.3" y="514.1" width="5" height="5" fill="#ece43a"/><rect x="139.5" y="514.1" width="5" height="5" fill="#ece43a"/><rect x="73.8" y="578.4" width="5" height="5" fill="#ece43a"/><rect x="202.7" y="578.4" width="5" height="5" fill="#ece43a"/><rect x="76.3" y="642.7" width="5" height="5" fill="#ece43a"/><rect x="204" y="642.7" width="5" height="5" fill="#ece43a"/><rect x="142" y="642.7" width="5" height="5" fill="#ece43a"/><rect x="140.7" y="642.7" width="5" height="5" fill="#ece43a"/><rect x="76.3" y="514.1" width="5" height="5" fill="#ece43a"/><rect x="204" y="514.1" width="5" height="5" fill="#ece43a"/><rect x="142" y="514.1" width="5" height="5" fill="#ece43a"/><rect x="140.7" y="514.1" width="5" height="5" fill="#ece43a"/><rect x="78.7" y="578.4" width="5" height="5" fill="#ece43a"/><rect x="205.2" y="578.4" width="5" height="5" fill="#ece43a"/><rect x="86.1" y="642.7" width="5" height="5" fill="#ece43a"/><rect x="208.9" y="642.7" width="5" height="5" fill="#ece43a"/><rect x="153" y="642.7" width="5" height="5" fill="#ece43a"/><rect x="149.3" y="642.7" width="5" height="5" fill="#ece43a"/><rect x="86.1" y="514.1" width="5" height="5" fill="#ece43a"/><rect x="208.9" y="514.1" width="5" height="5" fill="#ece43a"/><rect x="153" y="514.1" width="5" height="5" fill="#ece43a"/><rect x="149.3" y="514.1" width="5" height="5" fill="#ece43a"/><rect x="93.4" y="578.4" width="5" height="5" fill="#ece43a"/><rect x="212.6" y="578.4" width="5" height="5" fill="#ece43a"/><rect x="105.3" y="642.7" width="5" height="5" fill="#ece43a"/><rect x="218.5" y="642.7" width="5" height="5" fill="#ece43a"/><rect x="170.9" y="642.7" width="5" height="5" fill="#ece43a"/><rect x="164.9" y="642.7" width="5" height="5" fill="#ece43a"/><rect x="105.3" y="514.1" width="5" height="5" fill="#ece43a"/><rect x="218.5" y="514.1" width="5" height="5" fill="#ece43a"/><rect x="170.9" y="514.1" width="5" height="5" fill="#ece43a"/><rect x="164.9" y="514.1" width="5" height="5" fill="#ece43a"/><rect x="117.2" y="578.4" width="5" height="5" fill="#ece43a"/><rect x="224.5" y="578.4" width="5" height="5" fill="#ece43a"/><rect x="133.3" y="642.7" width="5" height="5" fill="#ece43a"/><rect x="232.5" y="642.7" width="5" height="5" fill="#ece43a"/><rect x="194.9" y="642.7" width="5" height="5" fill="#ece43a"/><rect x="186.9" y="642.7" width="5" height="5" fill="#ece43a"/><rect x="133.3" y="514.1" width="5" height="5" fill="#ece43a"/><rect x="232.5" y="514.1" width="5" height="5" fill="#ece43a"/><rect x="194.9" y="514.1" width="5" height="5" fill="#ece43a"/><rect x="186.9" y="514.1" width="5" height="5" fill="#ece43a"/><rect x="149.3" y="578.4" width="5" height="5" fill="#ece43a"/><rect x="240.5" y="578.4" width="5" height="5" fill="#ece43a"/><rect x="168.9" y="642.7" width="5" height="5" fill="#ece43a"/><rect x="250.3" y="642.7" width="5" height="5" fill="#ece43a"/><rect x="224.2" y="642.7" width="5" height="5" fill="#ece43a"/><rect x="214.5" y="642.7" width="5" height="5" fill="#ece43a"/><rect x="168.9" y="514.1" width="5" height="5" fill="#ece43a"/><rect x="250.3" y="514.1" width="5" height="5" fill="#ece43a"/><rect x="224.2" y="514.1" width="5" height="5" fill="#ece43a"/><rect x="214.5" y="514.1" width="5" height="5" fill="#ece43a"/><rect x="188.4" y="578.4" width="5" height="5" fill="#ece43a"/><rect x="260.1" y="578.4" width="5" height="5" fill="#ece43a"/><rect x="210.7" y="642.7" width="5" height="5" fill="#ece43a"/><rect x="271.2" y="642.7" width="5" height="5" fill="#ece43a"/><rect x="257.7" y="642.7" width="5" height="5" fill="#ece43a"/><rect x="246.5" y="642.7" width="5" height="5" fill="#ece43a"/><rect x="210.7" y="514.1" width="5" height="5" fill="#ece43a"/><rect x="271.2" y="514.1" width="5" height="5" fill="#ece43a"/><rect x="257.7" y="514.1" width="5" height="5" fill="#ece43a"/><rect x="246.5" y="514.1" width="5" height="5" fill="#ece43a"/><rect x="233" y="578.4" width="5" height="5" fill="#ece43a"/><rect x="282.3" y="578.4" width="5" height="5" fill="#ece43a"/><rect x="257.2" y="642.7" width="5" height="5" fill="#ece43a"/><rect x="294.4" y="642.7" width="5" height="5" fill="#ece43a"/><rect x="294" y="642.7" width="5" height="5" fill="#ece43a"/><rect x="281.9" y="642.7" width="5" height="5" fill="#ece43a"/><rect x="257.2" y="514.1" width="5" height="5" fill="#ece43a"/><rect x="294.4" y="514.1" width="5" height="5" fill="#ece43a"/><rect x="294" y="514.1" width="5" height="5" fill="#ece43a"/><rect x="281.9" y="514.1" width="5" height="5" fill="#ece43a"/><rect x="281.4" y="578.4" width="5" height="5" fill="#ece43a"/><rect x="306.5" y="578.4" width="5" height="5" fill="#ece43a"/><rect x="306.5" y="642.7" width="5" height="5" fill="#ece43a"/><rect x="319.1" y="642.7" width="5" height="5" fill="#ece43a"/><rect x="331.7" y="642.7" width="5" height="5" fill="#ece43a"/><rect x="319.1" y="642.7" width="5" height="5" fill="#ece43a"/><rect x="306.5" y="514.1" width="5" height="5" fill="#ece43a"/><rect x="319.1" y="514.1" width="5" height="5" fill="#ece43a"/><rect x="331.7" y="514.1" width="5" height="5" fill="#ece43a"/><rect x="319.1" y="514.1" width="5" height="5" fill="#ece43a"/><rect x="331.7" y="578.4" width="5" height="5" fill="#ece43a"/><rect x="331.7" y="578.4" width="5" height="5" fill="#ece43a"/><rect x="281.4" y="642.7" width="5" height="5" fill="#f6f6f6"/><rect x="281.4" y="514.1" width="5" height="5" fill="#f6f6f6"/><rect x="306.5" y="642.7" width="5" height="5" fill="#f6f6f6"/><rect x="306.5" y="514.1" width="5" height="5" fill="#f6f6f6"/><rect x="233" y="642.7" width="5" height="5" fill="#f6f6f6"/><rect x="233" y="514.1" width="5" height="5" fill="#f6f6f6"/><rect x="282.3" y="642.7" width="5" height="5" fill="#f6f6f6"/><rect x="282.3" y="514.1" width="5" height="5" fill="#f6f6f6"/><rect x="188.4" y="642.7" width="5" height="5" fill="#f6f6f6"/><rect x="188.4" y="514.1" width="5" height="5" fill="#f6f6f6"/><rect x="260.1" y="642.7" width="5" height="5" fill="#f6f6f6"/><rect x="260.1" y="514.1" width="5" height="5" fill="#f6f6f6"/><rect x="149.3" y="642.7" width="5" height="5" fill="#f6f6f6"/><rect x="149.3" y="514.1" width="5" height="5" fill="#f6f6f6"/><rect x="240.5" y="642.7" width="5" height="5" fill="#f6f6f6"/><rect x="240.5" y="514.1" width="5" height="5" fill="#f6f6f6"/><rect x="117.2" y="642.7" width="5" height="5" fill="#f6f6f6"/><rect x="117.2" y="514.1" width="5" height="5" fill="#f6f6f6"/><rect x="224.5" y="642.7" width="5" height="5" fill="#f6f6f6"/><rect x="224.5" y="514.1" width="5" height="5" fill="#f6f6f6"/><rect x="93.4" y="642.7" width="5" height="5" fill="#f6f6f6"/><rect x="93.4" y="514.1" width="5" height="5" fill="#f6f6f6"/><rect x="212.6" y="642.7" width="5" height="5" fill="#f6f6f6"/><rect x="212.6" y="514.1" width="5" height="5" fill="#f6f6f6"/><rect x="78.7" y="642.7" width="5" height="5" fill="#f6f6f6"/><rect x="78.7" y="514.1" width="5" height="5" fill="#f6f6f6"/><rect x="205.2" y="642.7" width="5" height="5" fill="#f6f6f6"/><rect x="205.2" y="514.1" width="5" height="5" fill="#f6f6f6"/><rect x="73.8" y="642.7" width="5" height="5" fill="#f6f6f6"/><rect x="73.8" y="514.1" width="5" height="5" fill="#f6f6f6"/><rect x="202.7" y="642.7" width="5" height="5" fill="#f6f6f6"/><rect x="202.7" y="514.1" width="5" height="5" fill="#f6f6f6"/><rect x="78.7" y="642.7" width="5" height="5" fill="#f6f6f6"/><rect x="78.7" y="514.1" width="5" height="5" fill="#f6f6f6"/><rect x="205.2" y="642.7" width="5" height="5" fill="#f6f6f6"/><rect x="205.2" y="514.1" width="5" height="5" fill="#f6f6f6"/><rect x="93.4" y="642.7" width="5" height="5" fill="#f6f6f6"/><rect x="93.4" y="514.1" width="5" height="5" fill="#f6f6f6"/><rect x="212.6" y="642.7" width="5" height="5" fill="#f6f6f6"/><rect x="212.6" y="514.1" width="5" height="5" fill="#f6f6f6"/><rect x="117.2" y="642.7" width="5" height="5" fill="#f6f6f6"/><rect x="117.2" y="514.1" width="5" height="5" fill="#f6f6f6"/><rect x="224.5" y="642.7" width="5" height="5" fill="#f6f6f6"/><rect x="224.5" y="514.1" width="5" height="5" fill="#f6f6f6"/><rect x="149.3" y="642.7" width="5" height="5" fill="#f6f6f6"/><rect x="149.3" y="514.1" width="5" height="5" fill="#f6f6f6"/><rect x="240.5" y="642.7" width="5" height="5" fill="#f6f6f6"/><rect x="240.5" y="514.1" width="5" height="5" fill="#f6f6f6"/><rect x="188.4" y="642.7" width="5" height="5" fill="#f6f6f6"/><rect x="188.4" y="514.1" width="5" height="5" fill="#f6f6f6"/><rect x="260.1" y="642.7" width="5" height="5" fill="#f6f6f6"/><rect x="260.1" y="514.1" width="5" height="5" fill="#f6f6f6"/><rect x="233" y="642.7" width="5" height="5" fill="#f6f6f6"/><rect x="233" y="514.1" width="5" height="5" fill="#f6f6f6"/><rect x="282.3" y="642.7" width="5" height="5" fill="#f6f6f6"/><rect x="282.3" y="514.1" width="5" height="5" fill="#f6f6f6"/><rect x="281.4" y="642.7" width="5" height="5" fill="#f6f6f6"/><rect x="281.4" y="514.1" width="5" height="5" fill="#f6f6f6"/><rect x="306.5" y="642.7" width="5" height="5" fill="#f6f6f6"/><rect x="306.5" y="514.1" width="5" height="5" fill="#f6f6f6"/><rect x="331.7" y="642.7" width="5" height="5" fill="#f6f6f6"/><rect x="331.7" y="514.1" width="5" height="5" fill="#f6f6f6"/><rect x="331.7" y="642.7" width="5" height="5" fill="#f6f6f6"/><rect x="331.7" y="514.1" width="5" height="5" fill="#f6f6f6"/><rect x="331.7" y="642.7" width="5" height="5" fill="#e01818"/><rect x="331.7" y="514.1" width="5" height="5" fill="#e01818"/><rect x="331.7" y="642.7" width="5" height="5" fill="#e01818"/><rect x="331.7" y="514.1" width="5" height="5" fill="#e01818"/></g></svg><div style="position:absolute;left:479px;top:449px;width:13px;height:293px;background:#fbfbf8;"></div><svg style="position:absolute;left:479px;top:449px" width="13" height="293"><rect x="1" y="0.5" width="11" height="12" rx="1.5" fill="#c7d6f8" stroke="#dbe5fb"/><path d="M3.5,8 L6.5,5 L9.5,8" fill="none" stroke="#4d6185" stroke-width="1.6"/><rect x="1" y="280" width="11" height="12" rx="1.5" fill="#c7d6f8" stroke="#dbe5fb"/><path d="M3.5,285 L6.5,288 L9.5,285" fill="none" stroke="#4d6185" stroke-width="1.6"/><rect x="1.5" y="143.5" width="10" height="6" rx="1.5" fill="#d4e0fa" stroke="#a8bde8" stroke-width="0.8"/></svg><div style="position:absolute;left:40px;top:742px;width:439px;height:14px;background:#fbfbf8;"></div><svg style="position:absolute;left:40px;top:742px" width="439" height="14"><rect x="0.5" y="1" width="13" height="12" rx="1.5" fill="#c7d6f8" stroke="#dbe5fb"/><path d="M8,4 L5,7 L8,10" fill="none" stroke="#4d6185" stroke-width="1.6"/><rect x="425.5" y="1" width="13" height="12" rx="1.5" fill="#c7d6f8" stroke="#dbe5fb"/><path d="M431,4 L434,7 L431,10" fill="none" stroke="#4d6185" stroke-width="1.6"/><rect x="217.5" y="1.5" width="6" height="11" rx="1.5" fill="#d4e0fa" stroke="#a8bde8" stroke-width="0.8"/></svg><div style="position:absolute;left:479px;top:742px;width:13px;height:14px;background:#fbfbf8;"></div><div style="position:absolute;left:480px;top:745px;width:11px;height:11px;background:#2f74de;"></div><svg style="position:absolute;left:496px;top:449px" width="401" height="293" viewBox="496 449 401 293"><rect x="496" y="449" width="401" height="293" fill="#000"/><g stroke-width="1"><line x1="498.5" y1="449" x2="498.5" y2="742" stroke="#5a5a5a"/><line x1="503.5" y1="449" x2="503.5" y2="742" stroke="#5a5a5a"/><line x1="509.5" y1="449" x2="509.5" y2="742" stroke="#5a5a5a"/><line x1="515.5" y1="449" x2="515.5" y2="742" stroke="#747474"/><line x1="520.5" y1="449" x2="520.5" y2="742" stroke="#5a5a5a"/><line x1="526.5" y1="449" x2="526.5" y2="742" stroke="#5a5a5a"/><line x1="532.5" y1="449" x2="532.5" y2="742" stroke="#5a5a5a"/><line x1="537.5" y1="449" x2="537.5" y2="742" stroke="#5a5a5a"/><line x1="543.5" y1="449" x2="543.5" y2="742" stroke="#5a5a5a"/><line x1="548.5" y1="449" x2="548.5" y2="742" stroke="#5a5a5a"/><line x1="554.5" y1="449" x2="554.5" y2="742" stroke="#5a5a5a"/><line x1="560.5" y1="449" x2="560.5" y2="742" stroke="#747474"/><line x1="565.5" y1="449" x2="565.5" y2="742" stroke="#5a5a5a"/><line x1="571.5" y1="449" x2="571.5" y2="742" stroke="#5a5a5a"/><line x1="576.5" y1="449" x2="576.5" y2="742" stroke="#5a5a5a"/><line x1="582.5" y1="449" x2="582.5" y2="742" stroke="#5a5a5a"/><line x1="588.5" y1="449" x2="588.5" y2="742" stroke="#5a5a5a"/><line x1="593.5" y1="449" x2="593.5" y2="742" stroke="#5a5a5a"/><line x1="599.5" y1="449" x2="599.5" y2="742" stroke="#5a5a5a"/><line x1="604.5" y1="449" x2="604.5" y2="742" stroke="#747474"/><line x1="610.5" y1="449" x2="610.5" y2="742" stroke="#5a5a5a"/><line x1="616.5" y1="449" x2="616.5" y2="742" stroke="#5a5a5a"/><line x1="621.5" y1="449" x2="621.5" y2="742" stroke="#5a5a5a"/><line x1="627.5" y1="449" x2="627.5" y2="742" stroke="#5a5a5a"/><line x1="632.5" y1="449" x2="632.5" y2="742" stroke="#5a5a5a"/><line x1="638.5" y1="449" x2="638.5" y2="742" stroke="#5a5a5a"/><line x1="644.5" y1="449" x2="644.5" y2="742" stroke="#5a5a5a"/><line x1="649.5" y1="449" x2="649.5" y2="742" stroke="#747474"/><line x1="655.5" y1="449" x2="655.5" y2="742" stroke="#5a5a5a"/><line x1="661.5" y1="449" x2="661.5" y2="742" stroke="#5a5a5a"/><line x1="666.5" y1="449" x2="666.5" y2="742" stroke="#5a5a5a"/><line x1="672.5" y1="449" x2="672.5" y2="742" stroke="#5a5a5a"/><line x1="677.5" y1="449" x2="677.5" y2="742" stroke="#5a5a5a"/><line x1="683.5" y1="449" x2="683.5" y2="742" stroke="#5a5a5a"/><line x1="689.5" y1="449" x2="689.5" y2="742" stroke="#5a5a5a"/><line x1="694.5" y1="449" x2="694.5" y2="742" stroke="#747474"/><line x1="700.5" y1="449" x2="700.5" y2="742" stroke="#5a5a5a"/><line x1="705.5" y1="449" x2="705.5" y2="742" stroke="#5a5a5a"/><line x1="711.5" y1="449" x2="711.5" y2="742" stroke="#5a5a5a"/><line x1="717.5" y1="449" x2="717.5" y2="742" stroke="#5a5a5a"/><line x1="722.5" y1="449" x2="722.5" y2="742" stroke="#5a5a5a"/><line x1="728.5" y1="449" x2="728.5" y2="742" stroke="#5a5a5a"/><line x1="733.5" y1="449" x2="733.5" y2="742" stroke="#5a5a5a"/><line x1="739.5" y1="449" x2="739.5" y2="742" stroke="#747474"/><line x1="745.5" y1="449" x2="745.5" y2="742" stroke="#5a5a5a"/><line x1="750.5" y1="449" x2="750.5" y2="742" stroke="#5a5a5a"/><line x1="756.5" y1="449" x2="756.5" y2="742" stroke="#5a5a5a"/><line x1="762.5" y1="449" x2="762.5" y2="742" stroke="#5a5a5a"/><line x1="767.5" y1="449" x2="767.5" y2="742" stroke="#5a5a5a"/><line x1="773.5" y1="449" x2="773.5" y2="742" stroke="#5a5a5a"/><line x1="778.5" y1="449" x2="778.5" y2="742" stroke="#5a5a5a"/><line x1="784.5" y1="449" x2="784.5" y2="742" stroke="#747474"/><line x1="790.5" y1="449" x2="790.5" y2="742" stroke="#5a5a5a"/><line x1="795.5" y1="449" x2="795.5" y2="742" stroke="#5a5a5a"/><line x1="801.5" y1="449" x2="801.5" y2="742" stroke="#5a5a5a"/><line x1="806.5" y1="449" x2="806.5" y2="742" stroke="#5a5a5a"/><line x1="812.5" y1="449" x2="812.5" y2="742" stroke="#5a5a5a"/><line x1="818.5" y1="449" x2="818.5" y2="742" stroke="#5a5a5a"/><line x1="823.5" y1="449" x2="823.5" y2="742" stroke="#5a5a5a"/><line x1="829.5" y1="449" x2="829.5" y2="742" stroke="#747474"/><line x1="834.5" y1="449" x2="834.5" y2="742" stroke="#5a5a5a"/><line x1="840.5" y1="449" x2="840.5" y2="742" stroke="#5a5a5a"/><line x1="846.5" y1="449" x2="846.5" y2="742" stroke="#5a5a5a"/><line x1="851.5" y1="449" x2="851.5" y2="742" stroke="#5a5a5a"/><line x1="857.5" y1="449" x2="857.5" y2="742" stroke="#5a5a5a"/><line x1="863.5" y1="449" x2="863.5" y2="742" stroke="#5a5a5a"/><line x1="868.5" y1="449" x2="868.5" y2="742" stroke="#5a5a5a"/><line x1="874.5" y1="449" x2="874.5" y2="742" stroke="#747474"/><line x1="879.5" y1="449" x2="879.5" y2="742" stroke="#5a5a5a"/><line x1="885.5" y1="449" x2="885.5" y2="742" stroke="#5a5a5a"/><line x1="891.5" y1="449" x2="891.5" y2="742" stroke="#5a5a5a"/><line x1="896.5" y1="449" x2="896.5" y2="742" stroke="#5a5a5a"/><line x1="496" y1="450.5" x2="897" y2="450.5" stroke="#5a5a5a"/><line x1="496" y1="455.5" x2="897" y2="455.5" stroke="#747474"/><line x1="496" y1="461.5" x2="897" y2="461.5" stroke="#5a5a5a"/><line x1="496" y1="467.5" x2="897" y2="467.5" stroke="#5a5a5a"/><line x1="496" y1="472.5" x2="897" y2="472.5" stroke="#5a5a5a"/><line x1="496" y1="478.5" x2="897" y2="478.5" stroke="#5a5a5a"/><line x1="496" y1="484.5" x2="897" y2="484.5" stroke="#5a5a5a"/><line x1="496" y1="489.5" x2="897" y2="489.5" stroke="#5a5a5a"/><line x1="496" y1="495.5" x2="897" y2="495.5" stroke="#5a5a5a"/><line x1="496" y1="500.5" x2="897" y2="500.5" stroke="#747474"/><line x1="496" y1="506.5" x2="897" y2="506.5" stroke="#5a5a5a"/><line x1="496" y1="512.5" x2="897" y2="512.5" stroke="#5a5a5a"/><line x1="496" y1="517.5" x2="897" y2="517.5" stroke="#5a5a5a"/><line x1="496" y1="523.5" x2="897" y2="523.5" stroke="#5a5a5a"/><line x1="496" y1="528.5" x2="897" y2="528.5" stroke="#5a5a5a"/><line x1="496" y1="534.5" x2="897" y2="534.5" stroke="#5a5a5a"/><line x1="496" y1="540.5" x2="897" y2="540.5" stroke="#5a5a5a"/><line x1="496" y1="545.5" x2="897" y2="545.5" stroke="#747474"/><line x1="496" y1="551.5" x2="897" y2="551.5" stroke="#5a5a5a"/><line x1="496" y1="556.5" x2="897" y2="556.5" stroke="#5a5a5a"/><line x1="496" y1="562.5" x2="897" y2="562.5" stroke="#5a5a5a"/><line x1="496" y1="568.5" x2="897" y2="568.5" stroke="#5a5a5a"/><line x1="496" y1="573.5" x2="897" y2="573.5" stroke="#5a5a5a"/><line x1="496" y1="579.5" x2="897" y2="579.5" stroke="#5a5a5a"/><line x1="496" y1="585.5" x2="897" y2="585.5" stroke="#5a5a5a"/><line x1="496" y1="590.5" x2="897" y2="590.5" stroke="#747474"/><line x1="496" y1="596.5" x2="897" y2="596.5" stroke="#5a5a5a"/><line x1="496" y1="601.5" x2="897" y2="601.5" stroke="#5a5a5a"/><line x1="496" y1="607.5" x2="897" y2="607.5" stroke="#5a5a5a"/><line x1="496" y1="613.5" x2="897" y2="613.5" stroke="#5a5a5a"/><line x1="496" y1="618.5" x2="897" y2="618.5" stroke="#5a5a5a"/><line x1="496" y1="624.5" x2="897" y2="624.5" stroke="#5a5a5a"/><line x1="496" y1="629.5" x2="897" y2="629.5" stroke="#5a5a5a"/><line x1="496" y1="635.5" x2="897" y2="635.5" stroke="#747474"/><line x1="496" y1="641.5" x2="897" y2="641.5" stroke="#5a5a5a"/><line x1="496" y1="646.5" x2="897" y2="646.5" stroke="#5a5a5a"/><line x1="496" y1="652.5" x2="897" y2="652.5" stroke="#5a5a5a"/><line x1="496" y1="657.5" x2="897" y2="657.5" stroke="#5a5a5a"/><line x1="496" y1="663.5" x2="897" y2="663.5" stroke="#5a5a5a"/><line x1="496" y1="669.5" x2="897" y2="669.5" stroke="#5a5a5a"/><line x1="496" y1="674.5" x2="897" y2="674.5" stroke="#5a5a5a"/><line x1="496" y1="680.5" x2="897" y2="680.5" stroke="#747474"/><line x1="496" y1="685.5" x2="897" y2="685.5" stroke="#5a5a5a"/><line x1="496" y1="691.5" x2="897" y2="691.5" stroke="#5a5a5a"/><line x1="496" y1="697.5" x2="897" y2="697.5" stroke="#5a5a5a"/><line x1="496" y1="702.5" x2="897" y2="702.5" stroke="#5a5a5a"/><line x1="496" y1="708.5" x2="897" y2="708.5" stroke="#5a5a5a"/><line x1="496" y1="714.5" x2="897" y2="714.5" stroke="#5a5a5a"/><line x1="496" y1="719.5" x2="897" y2="719.5" stroke="#5a5a5a"/><line x1="496" y1="725.5" x2="897" y2="725.5" stroke="#747474"/><line x1="496" y1="730.5" x2="897" y2="730.5" stroke="#5a5a5a"/><line x1="496" y1="736.5" x2="897" y2="736.5" stroke="#5a5a5a"/><line x1="694.5" y1="449" x2="694.5" y2="742" stroke="#4a6464" stroke-width="1"/></g><g stroke="#8c1616" stroke-width="1.3"><line x1="515.4" y1="635" x2="518.8" y2="635"/><line x1="605.1" y1="635" x2="606.9" y2="635"/><line x1="515.4" y1="635" x2="605.1" y2="635"/><line x1="518.8" y1="635" x2="606.9" y2="635"/><line x1="518.8" y1="635" x2="605.1" y2="635"/><line x1="515.4" y1="545.4" x2="518.8" y2="545.4"/><line x1="605.1" y1="545.4" x2="606.9" y2="545.4"/><line x1="515.4" y1="545.4" x2="605.1" y2="545.4"/><line x1="518.8" y1="545.4" x2="606.9" y2="545.4"/><line x1="518.8" y1="545.4" x2="605.1" y2="545.4"/><line x1="515.4" y1="635" x2="515.4" y2="545.4"/><line x1="605.1" y1="635" x2="605.1" y2="545.4"/><line x1="518.8" y1="635" x2="518.8" y2="545.4"/><line x1="606.9" y1="635" x2="606.9" y2="545.4"/><line x1="518.8" y1="635" x2="529" y2="635"/><line x1="606.9" y1="635" x2="612" y2="635"/><line x1="529" y1="635" x2="612" y2="635"/><line x1="529" y1="635" x2="606.9" y2="635"/><line x1="518.8" y1="545.4" x2="529" y2="545.4"/><line x1="606.9" y1="545.4" x2="612" y2="545.4"/><line x1="529" y1="545.4" x2="612" y2="545.4"/><line x1="529" y1="545.4" x2="606.9" y2="545.4"/><line x1="529" y1="635" x2="529" y2="545.4"/><line x1="612" y1="635" x2="612" y2="545.4"/><line x1="529" y1="635" x2="545.6" y2="635"/><line x1="612" y1="635" x2="620.3" y2="635"/><line x1="545.6" y1="635" x2="620.3" y2="635"/><line x1="545.6" y1="635" x2="612" y2="635"/><line x1="529" y1="545.4" x2="545.6" y2="545.4"/><line x1="612" y1="545.4" x2="620.3" y2="545.4"/><line x1="545.6" y1="545.4" x2="620.3" y2="545.4"/><line x1="545.6" y1="545.4" x2="612" y2="545.4"/><line x1="545.6" y1="635" x2="545.6" y2="545.4"/><line x1="620.3" y1="635" x2="620.3" y2="545.4"/><line x1="545.6" y1="635" x2="568" y2="635"/><line x1="620.3" y1="635" x2="631.4" y2="635"/><line x1="568" y1="635" x2="631.4" y2="635"/><line x1="568" y1="635" x2="620.3" y2="635"/><line x1="545.6" y1="545.4" x2="568" y2="545.4"/><line x1="620.3" y1="545.4" x2="631.4" y2="545.4"/><line x1="568" y1="545.4" x2="631.4" y2="545.4"/><line x1="568" y1="545.4" x2="620.3" y2="545.4"/><line x1="568" y1="635" x2="568" y2="545.4"/><line x1="631.4" y1="635" x2="631.4" y2="545.4"/><line x1="568" y1="635" x2="595.2" y2="635"/><line x1="631.4" y1="635" x2="645" y2="635"/><line x1="595.2" y1="635" x2="645" y2="635"/><line x1="595.2" y1="635" x2="631.4" y2="635"/><line x1="568" y1="545.4" x2="595.2" y2="545.4"/><line x1="631.4" y1="545.4" x2="645" y2="545.4"/><line x1="595.2" y1="545.4" x2="645" y2="545.4"/><line x1="595.2" y1="545.4" x2="631.4" y2="545.4"/><line x1="595.2" y1="635" x2="595.2" y2="545.4"/><line x1="645" y1="635" x2="645" y2="545.4"/><line x1="595.2" y1="635" x2="626.2" y2="635"/><line x1="645" y1="635" x2="660.6" y2="635"/><line x1="626.2" y1="635" x2="660.6" y2="635"/><line x1="626.2" y1="635" x2="645" y2="635"/><line x1="595.2" y1="545.4" x2="626.2" y2="545.4"/><line x1="645" y1="545.4" x2="660.6" y2="545.4"/><line x1="626.2" y1="545.4" x2="660.6" y2="545.4"/><line x1="626.2" y1="545.4" x2="645" y2="545.4"/><line x1="626.2" y1="635" x2="626.2" y2="545.4"/><line x1="660.6" y1="635" x2="660.6" y2="545.4"/><line x1="626.2" y1="635" x2="659.9" y2="635"/><line x1="660.6" y1="635" x2="677.4" y2="635"/><line x1="659.9" y1="635" x2="677.4" y2="635"/><line x1="659.9" y1="635" x2="660.6" y2="635"/><line x1="626.2" y1="545.4" x2="659.9" y2="545.4"/><line x1="660.6" y1="545.4" x2="677.4" y2="545.4"/><line x1="659.9" y1="545.4" x2="677.4" y2="545.4"/><line x1="659.9" y1="545.4" x2="660.6" y2="545.4"/><line x1="659.9" y1="635" x2="659.9" y2="545.4"/><line x1="677.4" y1="635" x2="677.4" y2="545.4"/><line x1="659.9" y1="635" x2="694.9" y2="635"/><line x1="677.4" y1="635" x2="694.9" y2="635"/><line x1="694.9" y1="635" x2="694.9" y2="635"/><line x1="659.9" y1="545.4" x2="694.9" y2="545.4"/><line x1="677.4" y1="545.4" x2="694.9" y2="545.4"/><line x1="694.9" y1="545.4" x2="694.9" y2="545.4"/><line x1="694.9" y1="635" x2="694.9" y2="545.4"/><line x1="694.9" y1="635" x2="729.9" y2="635"/><line x1="694.9" y1="635" x2="712.4" y2="635"/><line x1="729.9" y1="635" x2="712.4" y2="635"/><line x1="694.9" y1="545.4" x2="729.9" y2="545.4"/><line x1="694.9" y1="545.4" x2="712.4" y2="545.4"/><line x1="729.9" y1="545.4" x2="712.4" y2="545.4"/><line x1="729.9" y1="635" x2="729.9" y2="545.4"/><line x1="712.4" y1="635" x2="712.4" y2="545.4"/><line x1="729.9" y1="635" x2="763.6" y2="635"/><line x1="712.4" y1="635" x2="729.2" y2="635"/><line x1="763.6" y1="635" x2="729.2" y2="635"/><line x1="763.6" y1="635" x2="712.4" y2="635"/><line x1="729.9" y1="545.4" x2="763.6" y2="545.4"/><line x1="712.4" y1="545.4" x2="729.2" y2="545.4"/><line x1="763.6" y1="545.4" x2="729.2" y2="545.4"/><line x1="763.6" y1="545.4" x2="712.4" y2="545.4"/><line x1="763.6" y1="635" x2="763.6" y2="545.4"/><line x1="729.2" y1="635" x2="729.2" y2="545.4"/><line x1="763.6" y1="635" x2="794.6" y2="635"/><line x1="729.2" y1="635" x2="744.8" y2="635"/><line x1="794.6" y1="635" x2="744.8" y2="635"/><line x1="794.6" y1="635" x2="729.2" y2="635"/><line x1="763.6" y1="545.4" x2="794.6" y2="545.4"/><line x1="729.2" y1="545.4" x2="744.8" y2="545.4"/><line x1="794.6" y1="545.4" x2="744.8" y2="545.4"/><line x1="794.6" y1="545.4" x2="729.2" y2="545.4"/><line x1="794.6" y1="635" x2="794.6" y2="545.4"/><line x1="744.8" y1="635" x2="744.8" y2="545.4"/><line x1="794.6" y1="635" x2="821.8" y2="635"/><line x1="744.8" y1="635" x2="758.4" y2="635"/><line x1="821.8" y1="635" x2="758.4" y2="635"/><line x1="821.8" y1="635" x2="744.8" y2="635"/><line x1="794.6" y1="545.4" x2="821.8" y2="545.4"/><line x1="744.8" y1="545.4" x2="758.4" y2="545.4"/><line x1="821.8" y1="545.4" x2="758.4" y2="545.4"/><line x1="821.8" y1="545.4" x2="744.8" y2="545.4"/><line x1="821.8" y1="635" x2="821.8" y2="545.4"/><line x1="758.4" y1="635" x2="758.4" y2="545.4"/><line x1="821.8" y1="635" x2="844.2" y2="635"/><line x1="758.4" y1="635" x2="769.5" y2="635"/><line x1="844.2" y1="635" x2="769.5" y2="635"/><line x1="844.2" y1="635" x2="758.4" y2="635"/><line x1="821.8" y1="545.4" x2="844.2" y2="545.4"/><line x1="758.4" y1="545.4" x2="769.5" y2="545.4"/><line x1="844.2" y1="545.4" x2="769.5" y2="545.4"/><line x1="844.2" y1="545.4" x2="758.4" y2="545.4"/><line x1="844.2" y1="635" x2="844.2" y2="545.4"/><line x1="769.5" y1="635" x2="769.5" y2="545.4"/><line x1="844.2" y1="635" x2="860.8" y2="635"/><line x1="769.5" y1="635" x2="777.8" y2="635"/><line x1="860.8" y1="635" x2="777.8" y2="635"/><line x1="860.8" y1="635" x2="769.5" y2="635"/><line x1="844.2" y1="545.4" x2="860.8" y2="545.4"/><line x1="769.5" y1="545.4" x2="777.8" y2="545.4"/><line x1="860.8" y1="545.4" x2="777.8" y2="545.4"/><line x1="860.8" y1="545.4" x2="769.5" y2="545.4"/><line x1="860.8" y1="635" x2="860.8" y2="545.4"/><line x1="777.8" y1="635" x2="777.8" y2="545.4"/><line x1="860.8" y1="635" x2="871" y2="635"/><line x1="777.8" y1="635" x2="782.9" y2="635"/><line x1="871" y1="635" x2="782.9" y2="635"/><line x1="871" y1="635" x2="777.8" y2="635"/><line x1="860.8" y1="545.4" x2="871" y2="545.4"/><line x1="777.8" y1="545.4" x2="782.9" y2="545.4"/><line x1="871" y1="545.4" x2="782.9" y2="545.4"/><line x1="871" y1="545.4" x2="777.8" y2="545.4"/><line x1="871" y1="635" x2="871" y2="545.4"/><line x1="782.9" y1="635" x2="782.9" y2="545.4"/><line x1="871" y1="635" x2="874.4" y2="635"/><line x1="782.9" y1="635" x2="784.7" y2="635"/><line x1="874.4" y1="635" x2="784.7" y2="635"/><line x1="874.4" y1="635" x2="782.9" y2="635"/><line x1="871" y1="545.4" x2="874.4" y2="545.4"/><line x1="782.9" y1="545.4" x2="784.7" y2="545.4"/><line x1="874.4" y1="545.4" x2="784.7" y2="545.4"/><line x1="874.4" y1="545.4" x2="782.9" y2="545.4"/><line x1="874.4" y1="635" x2="874.4" y2="545.4"/><line x1="784.7" y1="635" x2="784.7" y2="545.4"/></g><g stroke="#3a2a00" stroke-width="0.5" stroke-opacity="0.6"><rect x="514.6" y="632.5" width="5" height="5" fill="#ece43a"/><rect x="603.5" y="632.5" width="5" height="5" fill="#ece43a"/><rect x="557.8" y="632.5" width="5" height="5" fill="#ece43a"/><rect x="560.3" y="632.5" width="5" height="5" fill="#ece43a"/><rect x="559.5" y="632.5" width="5" height="5" fill="#ece43a"/><rect x="514.6" y="542.9" width="5" height="5" fill="#ece43a"/><rect x="603.5" y="542.9" width="5" height="5" fill="#ece43a"/><rect x="557.8" y="542.9" width="5" height="5" fill="#ece43a"/><rect x="560.3" y="542.9" width="5" height="5" fill="#ece43a"/><rect x="559.5" y="542.9" width="5" height="5" fill="#ece43a"/><rect x="512.9" y="587.7" width="5" height="5" fill="#ece43a"/><rect x="602.6" y="587.7" width="5" height="5" fill="#ece43a"/><rect x="516.3" y="587.7" width="5" height="5" fill="#ece43a"/><rect x="604.4" y="587.7" width="5" height="5" fill="#ece43a"/><rect x="521.4" y="632.5" width="5" height="5" fill="#ece43a"/><rect x="606.9" y="632.5" width="5" height="5" fill="#ece43a"/><rect x="568" y="632.5" width="5" height="5" fill="#ece43a"/><rect x="565.5" y="632.5" width="5" height="5" fill="#ece43a"/><rect x="521.4" y="542.9" width="5" height="5" fill="#ece43a"/><rect x="606.9" y="542.9" width="5" height="5" fill="#ece43a"/><rect x="568" y="542.9" width="5" height="5" fill="#ece43a"/><rect x="565.5" y="542.9" width="5" height="5" fill="#ece43a"/><rect x="526.5" y="587.7" width="5" height="5" fill="#ece43a"/><rect x="609.5" y="587.7" width="5" height="5" fill="#ece43a"/><rect x="534.8" y="632.5" width="5" height="5" fill="#ece43a"/><rect x="613.6" y="632.5" width="5" height="5" fill="#ece43a"/><rect x="580.5" y="632.5" width="5" height="5" fill="#ece43a"/><rect x="576.3" y="632.5" width="5" height="5" fill="#ece43a"/><rect x="534.8" y="542.9" width="5" height="5" fill="#ece43a"/><rect x="613.6" y="542.9" width="5" height="5" fill="#ece43a"/><rect x="580.5" y="542.9" width="5" height="5" fill="#ece43a"/><rect x="576.3" y="542.9" width="5" height="5" fill="#ece43a"/><rect x="543.1" y="587.7" width="5" height="5" fill="#ece43a"/><rect x="617.8" y="587.7" width="5" height="5" fill="#ece43a"/><rect x="554.3" y="632.5" width="5" height="5" fill="#ece43a"/><rect x="623.3" y="632.5" width="5" height="5" fill="#ece43a"/><rect x="597.2" y="632.5" width="5" height="5" fill="#ece43a"/><rect x="591.6" y="632.5" width="5" height="5" fill="#ece43a"/><rect x="554.3" y="542.9" width="5" height="5" fill="#ece43a"/><rect x="623.3" y="542.9" width="5" height="5" fill="#ece43a"/><rect x="597.2" y="542.9" width="5" height="5" fill="#ece43a"/><rect x="591.6" y="542.9" width="5" height="5" fill="#ece43a"/><rect x="565.5" y="587.7" width="5" height="5" fill="#ece43a"/><rect x="628.9" y="587.7" width="5" height="5" fill="#ece43a"/><rect x="579.1" y="632.5" width="5" height="5" fill="#ece43a"/><rect x="635.7" y="632.5" width="5" height="5" fill="#ece43a"/><rect x="617.6" y="632.5" width="5" height="5" fill="#ece43a"/><rect x="610.8" y="632.5" width="5" height="5" fill="#ece43a"/><rect x="579.1" y="542.9" width="5" height="5" fill="#ece43a"/><rect x="635.7" y="542.9" width="5" height="5" fill="#ece43a"/><rect x="617.6" y="542.9" width="5" height="5" fill="#ece43a"/><rect x="610.8" y="542.9" width="5" height="5" fill="#ece43a"/><rect x="592.7" y="587.7" width="5" height="5" fill="#ece43a"/><rect x="642.5" y="587.7" width="5" height="5" fill="#ece43a"/><rect x="608.2" y="632.5" width="5" height="5" fill="#ece43a"/><rect x="650.3" y="632.5" width="5" height="5" fill="#ece43a"/><rect x="640.9" y="632.5" width="5" height="5" fill="#ece43a"/><rect x="633.1" y="632.5" width="5" height="5" fill="#ece43a"/><rect x="608.2" y="542.9" width="5" height="5" fill="#ece43a"/><rect x="650.3" y="542.9" width="5" height="5" fill="#ece43a"/><rect x="640.9" y="542.9" width="5" height="5" fill="#ece43a"/><rect x="633.1" y="542.9" width="5" height="5" fill="#ece43a"/><rect x="623.7" y="587.7" width="5" height="5" fill="#ece43a"/><rect x="658.1" y="587.7" width="5" height="5" fill="#ece43a"/><rect x="640.5" y="632.5" width="5" height="5" fill="#ece43a"/><rect x="666.5" y="632.5" width="5" height="5" fill="#ece43a"/><rect x="666.1" y="632.5" width="5" height="5" fill="#ece43a"/><rect x="657.7" y="632.5" width="5" height="5" fill="#ece43a"/><rect x="640.5" y="542.9" width="5" height="5" fill="#ece43a"/><rect x="666.5" y="542.9" width="5" height="5" fill="#ece43a"/><rect x="666.1" y="542.9" width="5" height="5" fill="#ece43a"/><rect x="657.7" y="542.9" width="5" height="5" fill="#ece43a"/><rect x="657.4" y="587.7" width="5" height="5" fill="#ece43a"/><rect x="674.9" y="587.7" width="5" height="5" fill="#ece43a"/><rect x="674.9" y="632.5" width="5" height="5" fill="#ece43a"/><rect x="683.6" y="632.5" width="5" height="5" fill="#ece43a"/><rect x="692.4" y="632.5" width="5" height="5" fill="#ece43a"/><rect x="683.6" y="632.5" width="5" height="5" fill="#ece43a"/><rect x="674.9" y="542.9" width="5" height="5" fill="#ece43a"/><rect x="683.6" y="542.9" width="5" height="5" fill="#ece43a"/><rect x="692.4" y="542.9" width="5" height="5" fill="#ece43a"/><rect x="683.6" y="542.9" width="5" height="5" fill="#ece43a"/><rect x="692.4" y="587.7" width="5" height="5" fill="#ece43a"/><rect x="692.4" y="587.7" width="5" height="5" fill="#ece43a"/><rect x="709.9" y="632.5" width="5" height="5" fill="#ece43a"/><rect x="701.2" y="632.5" width="5" height="5" fill="#ece43a"/><rect x="718.7" y="632.5" width="5" height="5" fill="#ece43a"/><rect x="709.9" y="632.5" width="5" height="5" fill="#ece43a"/><rect x="709.9" y="542.9" width="5" height="5" fill="#ece43a"/><rect x="701.2" y="542.9" width="5" height="5" fill="#ece43a"/><rect x="718.7" y="542.9" width="5" height="5" fill="#ece43a"/><rect x="709.9" y="542.9" width="5" height="5" fill="#ece43a"/><rect x="727.4" y="587.7" width="5" height="5" fill="#ece43a"/><rect x="709.9" y="587.7" width="5" height="5" fill="#ece43a"/><rect x="744.3" y="632.5" width="5" height="5" fill="#ece43a"/><rect x="718.3" y="632.5" width="5" height="5" fill="#ece43a"/><rect x="743.9" y="632.5" width="5" height="5" fill="#ece43a"/><rect x="735.5" y="632.5" width="5" height="5" fill="#ece43a"/><rect x="744.3" y="542.9" width="5" height="5" fill="#ece43a"/><rect x="718.3" y="542.9" width="5" height="5" fill="#ece43a"/><rect x="743.9" y="542.9" width="5" height="5" fill="#ece43a"/><rect x="735.5" y="542.9" width="5" height="5" fill="#ece43a"/><rect x="761.1" y="587.7" width="5" height="5" fill="#ece43a"/><rect x="726.7" y="587.7" width="5" height="5" fill="#ece43a"/><rect x="776.6" y="632.5" width="5" height="5" fill="#ece43a"/><rect x="734.5" y="632.5" width="5" height="5" fill="#ece43a"/><rect x="767.2" y="632.5" width="5" height="5" fill="#ece43a"/><rect x="759.4" y="632.5" width="5" height="5" fill="#ece43a"/><rect x="776.6" y="542.9" width="5" height="5" fill="#ece43a"/><rect x="734.5" y="542.9" width="5" height="5" fill="#ece43a"/><rect x="767.2" y="542.9" width="5" height="5" fill="#ece43a"/><rect x="759.4" y="542.9" width="5" height="5" fill="#ece43a"/><rect x="792.1" y="587.7" width="5" height="5" fill="#ece43a"/><rect x="742.3" y="587.7" width="5" height="5" fill="#ece43a"/><rect x="805.7" y="632.5" width="5" height="5" fill="#ece43a"/><rect x="749.1" y="632.5" width="5" height="5" fill="#ece43a"/><rect x="787.6" y="632.5" width="5" height="5" fill="#ece43a"/><rect x="780.8" y="632.5" width="5" height="5" fill="#ece43a"/><rect x="805.7" y="542.9" width="5" height="5" fill="#ece43a"/><rect x="749.1" y="542.9" width="5" height="5" fill="#ece43a"/><rect x="787.6" y="542.9" width="5" height="5" fill="#ece43a"/><rect x="780.8" y="542.9" width="5" height="5" fill="#ece43a"/><rect x="819.3" y="587.7" width="5" height="5" fill="#ece43a"/><rect x="755.9" y="587.7" width="5" height="5" fill="#ece43a"/><rect x="830.5" y="632.5" width="5" height="5" fill="#ece43a"/><rect x="761.5" y="632.5" width="5" height="5" fill="#ece43a"/><rect x="804.3" y="632.5" width="5" height="5" fill="#ece43a"/><rect x="798.8" y="632.5" width="5" height="5" fill="#ece43a"/><rect x="830.5" y="542.9" width="5" height="5" fill="#ece43a"/><rect x="761.5" y="542.9" width="5" height="5" fill="#ece43a"/><rect x="804.3" y="542.9" width="5" height="5" fill="#ece43a"/><rect x="798.8" y="542.9" width="5" height="5" fill="#ece43a"/><rect x="841.7" y="587.7" width="5" height="5" fill="#ece43a"/><rect x="767" y="587.7" width="5" height="5" fill="#ece43a"/><rect x="850" y="632.5" width="5" height="5" fill="#ece43a"/><rect x="771.2" y="632.5" width="5" height="5" fill="#ece43a"/><rect x="816.8" y="632.5" width="5" height="5" fill="#ece43a"/><rect x="812.6" y="632.5" width="5" height="5" fill="#ece43a"/><rect x="850" y="542.9" width="5" height="5" fill="#ece43a"/><rect x="771.2" y="542.9" width="5" height="5" fill="#ece43a"/><rect x="816.8" y="542.9" width="5" height="5" fill="#ece43a"/><rect x="812.6" y="542.9" width="5" height="5" fill="#ece43a"/><rect x="858.3" y="587.7" width="5" height="5" fill="#ece43a"/><rect x="775.3" y="587.7" width="5" height="5" fill="#ece43a"/><rect x="863.4" y="632.5" width="5" height="5" fill="#ece43a"/><rect x="777.9" y="632.5" width="5" height="5" fill="#ece43a"/><rect x="824.5" y="632.5" width="5" height="5" fill="#ece43a"/><rect x="821.9" y="632.5" width="5" height="5" fill="#ece43a"/><rect x="863.4" y="542.9" width="5" height="5" fill="#ece43a"/><rect x="777.9" y="542.9" width="5" height="5" fill="#ece43a"/><rect x="824.5" y="542.9" width="5" height="5" fill="#ece43a"/><rect x="821.9" y="542.9" width="5" height="5" fill="#ece43a"/><rect x="868.5" y="587.7" width="5" height="5" fill="#ece43a"/><rect x="780.4" y="587.7" width="5" height="5" fill="#ece43a"/><rect x="870.2" y="632.5" width="5" height="5" fill="#ece43a"/><rect x="781.3" y="632.5" width="5" height="5" fill="#ece43a"/><rect x="827" y="632.5" width="5" height="5" fill="#ece43a"/><rect x="826.2" y="632.5" width="5" height="5" fill="#ece43a"/><rect x="870.2" y="542.9" width="5" height="5" fill="#ece43a"/><rect x="781.3" y="542.9" width="5" height="5" fill="#ece43a"/><rect x="827" y="542.9" width="5" height="5" fill="#ece43a"/><rect x="826.2" y="542.9" width="5" height="5" fill="#ece43a"/><rect x="871.9" y="587.7" width="5" height="5" fill="#ece43a"/><rect x="782.2" y="587.7" width="5" height="5" fill="#ece43a"/><rect x="516.3" y="632.5" width="5" height="5" fill="#f6f6f6"/><rect x="516.3" y="542.9" width="5" height="5" fill="#f6f6f6"/><rect x="604.4" y="632.5" width="5" height="5" fill="#f6f6f6"/><rect x="604.4" y="542.9" width="5" height="5" fill="#f6f6f6"/><rect x="526.5" y="632.5" width="5" height="5" fill="#f6f6f6"/><rect x="526.5" y="542.9" width="5" height="5" fill="#f6f6f6"/><rect x="609.5" y="632.5" width="5" height="5" fill="#f6f6f6"/><rect x="609.5" y="542.9" width="5" height="5" fill="#f6f6f6"/><rect x="543.1" y="632.5" width="5" height="5" fill="#f6f6f6"/><rect x="543.1" y="542.9" width="5" height="5" fill="#f6f6f6"/><rect x="617.8" y="632.5" width="5" height="5" fill="#f6f6f6"/><rect x="617.8" y="542.9" width="5" height="5" fill="#f6f6f6"/><rect x="565.5" y="632.5" width="5" height="5" fill="#f6f6f6"/><rect x="565.5" y="542.9" width="5" height="5" fill="#f6f6f6"/><rect x="628.9" y="632.5" width="5" height="5" fill="#f6f6f6"/><rect x="628.9" y="542.9" width="5" height="5" fill="#f6f6f6"/><rect x="592.7" y="632.5" width="5" height="5" fill="#f6f6f6"/><rect x="592.7" y="542.9" width="5" height="5" fill="#f6f6f6"/><rect x="642.5" y="632.5" width="5" height="5" fill="#f6f6f6"/><rect x="642.5" y="542.9" width="5" height="5" fill="#f6f6f6"/><rect x="623.7" y="632.5" width="5" height="5" fill="#f6f6f6"/><rect x="623.7" y="542.9" width="5" height="5" fill="#f6f6f6"/><rect x="658.1" y="632.5" width="5" height="5" fill="#f6f6f6"/><rect x="658.1" y="542.9" width="5" height="5" fill="#f6f6f6"/><rect x="657.4" y="632.5" width="5" height="5" fill="#f6f6f6"/><rect x="657.4" y="542.9" width="5" height="5" fill="#f6f6f6"/><rect x="674.9" y="632.5" width="5" height="5" fill="#f6f6f6"/><rect x="674.9" y="542.9" width="5" height="5" fill="#f6f6f6"/><rect x="692.4" y="632.5" width="5" height="5" fill="#f6f6f6"/><rect x="692.4" y="542.9" width="5" height="5" fill="#f6f6f6"/><rect x="692.4" y="632.5" width="5" height="5" fill="#f6f6f6"/><rect x="692.4" y="542.9" width="5" height="5" fill="#f6f6f6"/><rect x="727.4" y="632.5" width="5" height="5" fill="#f6f6f6"/><rect x="727.4" y="542.9" width="5" height="5" fill="#f6f6f6"/><rect x="709.9" y="632.5" width="5" height="5" fill="#f6f6f6"/><rect x="709.9" y="542.9" width="5" height="5" fill="#f6f6f6"/><rect x="761.1" y="632.5" width="5" height="5" fill="#f6f6f6"/><rect x="761.1" y="542.9" width="5" height="5" fill="#f6f6f6"/><rect x="726.7" y="632.5" width="5" height="5" fill="#f6f6f6"/><rect x="726.7" y="542.9" width="5" height="5" fill="#f6f6f6"/><rect x="792.1" y="632.5" width="5" height="5" fill="#f6f6f6"/><rect x="792.1" y="542.9" width="5" height="5" fill="#f6f6f6"/><rect x="742.3" y="632.5" width="5" height="5" fill="#f6f6f6"/><rect x="742.3" y="542.9" width="5" height="5" fill="#f6f6f6"/><rect x="819.3" y="632.5" width="5" height="5" fill="#f6f6f6"/><rect x="819.3" y="542.9" width="5" height="5" fill="#f6f6f6"/><rect x="755.9" y="632.5" width="5" height="5" fill="#f6f6f6"/><rect x="755.9" y="542.9" width="5" height="5" fill="#f6f6f6"/><rect x="841.7" y="632.5" width="5" height="5" fill="#f6f6f6"/><rect x="841.7" y="542.9" width="5" height="5" fill="#f6f6f6"/><rect x="767" y="632.5" width="5" height="5" fill="#f6f6f6"/><rect x="767" y="542.9" width="5" height="5" fill="#f6f6f6"/><rect x="858.3" y="632.5" width="5" height="5" fill="#f6f6f6"/><rect x="858.3" y="542.9" width="5" height="5" fill="#f6f6f6"/><rect x="775.3" y="632.5" width="5" height="5" fill="#f6f6f6"/><rect x="775.3" y="542.9" width="5" height="5" fill="#f6f6f6"/><rect x="868.5" y="632.5" width="5" height="5" fill="#f6f6f6"/><rect x="868.5" y="542.9" width="5" height="5" fill="#f6f6f6"/><rect x="780.4" y="632.5" width="5" height="5" fill="#f6f6f6"/><rect x="780.4" y="542.9" width="5" height="5" fill="#f6f6f6"/><rect x="871.9" y="632.5" width="5" height="5" fill="#f6f6f6"/><rect x="871.9" y="542.9" width="5" height="5" fill="#f6f6f6"/><rect x="782.2" y="632.5" width="5" height="5" fill="#f6f6f6"/><rect x="782.2" y="542.9" width="5" height="5" fill="#f6f6f6"/><rect x="512.9" y="632.5" width="5" height="5" fill="#e01818"/><rect x="512.9" y="542.9" width="5" height="5" fill="#e01818"/><rect x="602.6" y="632.5" width="5" height="5" fill="#e01818"/><rect x="602.6" y="542.9" width="5" height="5" fill="#e01818"/></g></svg><div style="position:absolute;left:897px;top:449px;width:14px;height:293px;background:#fbfbf8;"></div><svg style="position:absolute;left:897px;top:449px" width="14" height="293"><rect x="1" y="0.5" width="12" height="12" rx="1.5" fill="#c7d6f8" stroke="#dbe5fb"/><path d="M4,8 L7,5 L10,8" fill="none" stroke="#4d6185" stroke-width="1.6"/><rect x="1" y="280" width="12" height="12" rx="1.5" fill="#c7d6f8" stroke="#dbe5fb"/><path d="M4,285 L7,288 L10,285" fill="none" stroke="#4d6185" stroke-width="1.6"/><rect x="1.5" y="143.5" width="11" height="6" rx="1.5" fill="#d4e0fa" stroke="#a8bde8" stroke-width="0.8"/></svg><div style="position:absolute;left:496px;top:742px;width:401px;height:14px;background:#fbfbf8;"></div><svg style="position:absolute;left:496px;top:742px" width="401" height="14"><rect x="0.5" y="1" width="13" height="12" rx="1.5" fill="#c7d6f8" stroke="#dbe5fb"/><path d="M8,4 L5,7 L8,10" fill="none" stroke="#4d6185" stroke-width="1.6"/><rect x="387.5" y="1" width="13" height="12" rx="1.5" fill="#c7d6f8" stroke="#dbe5fb"/><path d="M393,4 L396,7 L393,10" fill="none" stroke="#4d6185" stroke-width="1.6"/><rect x="198.5" y="1.5" width="6" height="11" rx="1.5" fill="#d4e0fa" stroke="#a8bde8" stroke-width="0.8"/></svg><div style="position:absolute;left:897px;top:742px;width:14px;height:14px;background:#fbfbf8;"></div><div style="position:absolute;left:898px;top:745px;width:12px;height:11px;background:#2f74de;"></div><div style="position:absolute;left:911px;top:80px;width:113px;height:676px;background:#ece9d8;border-left:1px solid #fff;box-sizing:border-box;"></div><div style="position:absolute;left:911px;top:80px;width:1px;height:676px;background:#d6d2c2;"></div><div style="position:absolute;left:912px;top:82px;width:112px;height:1px;background:#c8c4b4;"></div><div style="position:absolute;left:912px;top:83px;width:112px;height:1px;background:#fff;"></div><div class="t" style="left:919px;top:91px;">Select:</div><div style="position:absolute;left:919px;top:104px;width:98px;height:12px;box-sizing:border-box;background:#f4f3ee;border:1px solid #8a877a;border-right-color:#fff;border-bottom-color:#fff;box-shadow:inset 1px 1px 0 #c0bcac;"></div><div class="t" style="left:919px;top:104px;width:98px;text-align:center;line-height:12px;">Groups</div><div style="position:absolute;left:919px;top:122px;width:98px;height:12px;box-sizing:border-box;background:#f0efe8;border:1px solid #fff;border-right-color:#8a877a;border-bottom-color:#8a877a;box-shadow:inset -1px -1px 0 #c8c4b4;"></div><div class="t" style="left:919px;top:122px;width:98px;text-align:center;line-height:12px;">Objects</div><div style="position:absolute;left:919px;top:139px;width:98px;height:12px;box-sizing:border-box;background:#f0efe8;border:1px solid #fff;border-right-color:#8a877a;border-bottom-color:#8a877a;box-shadow:inset -1px -1px 0 #c8c4b4;"></div><div class="t" style="left:919px;top:139px;width:98px;text-align:center;line-height:12px;">Solids</div><div style="position:absolute;left:912px;top:157px;width:112px;height:1px;background:#c8c4b4;"></div><div style="position:absolute;left:912px;top:158px;width:112px;height:1px;background:#fff;"></div><div class="t" style="left:915px;top:161px;">VisGroups:</div><div style="position:absolute;left:947px;top:174px;width:31px;height:14px;background:#ece9d8;border:1px solid #fff;border-right-color:#8a877a;border-bottom:none;box-sizing:border-box;"></div><div class="t" style="left:951px;top:176px;">Auto</div><div style="position:absolute;left:916px;top:172px;width:31px;height:16px;background:#ece9d8;border:1px solid #fff;border-right-color:#8a877a;border-bottom:none;box-sizing:border-box;"></div><div class="t" style="left:921px;top:174px;">User</div><div style="position:absolute;left:915px;top:187px;width:107px;height:119px;background:#ece9d8;border:1px solid #fff;border-right-color:#8a877a;border-bottom-color:#8a877a;box-sizing:border-box;"></div><div style="position:absolute;left:917px;top:190px;width:102px;height:113px;background:#fff;border:1px solid #a09c8c;border-right-color:#f4f2ea;border-bottom-color:#f4f2ea;box-sizing:border-box;"></div><div style="position:absolute;left:912px;top:311px;width:27px;height:14px;box-sizing:border-box;background:#f0efe8;border:1px solid #fff;border-right-color:#8a877a;border-bottom-color:#8a877a;box-shadow:inset -1px -1px 0 #c8c4b4;"></div><div class="t" style="left:912px;top:311px;width:27px;text-align:center;line-height:14px;"><u>S</u>how</div><div style="position:absolute;left:940px;top:311px;width:26px;height:14px;box-sizing:border-box;background:#f0efe8;border:1px solid #fff;border-right-color:#8a877a;border-bottom-color:#8a877a;box-shadow:inset -1px -1px 0 #c8c4b4;"></div><div class="t" style="left:940px;top:311px;width:26px;text-align:center;line-height:14px;"><u>E</u>dit</div><div style="position:absolute;left:968px;top:311px;width:27px;height:14px;box-sizing:border-box;background:#f0efe8;border:1px solid #fff;border-right-color:#8a877a;border-bottom-color:#8a877a;box-shadow:inset -1px -1px 0 #c8c4b4;"></div><div class="t" style="left:968px;top:311px;width:27px;text-align:center;line-height:14px;"><u>M</u>ark</div><div style="position:absolute;left:996px;top:311px;width:14px;height:14px;box-sizing:border-box;background:#f0efe8;border:1px solid #fff;border-right-color:#8a877a;border-bottom-color:#8a877a;box-shadow:inset -1px -1px 0 #c8c4b4;"></div><div class="t" style="left:996px;top:311px;width:14px;text-align:center;line-height:14px;"></div><div style="position:absolute;left:1010px;top:311px;width:14px;height:14px;box-sizing:border-box;background:#f0efe8;border:1px solid #fff;border-right-color:#8a877a;border-bottom-color:#8a877a;box-shadow:inset -1px -1px 0 #c8c4b4;"></div><div class="t" style="left:1010px;top:311px;width:14px;text-align:center;line-height:14px;"></div><svg style="position:absolute;left:996px;top:311px" width="14" height="14"><path d="M7,3 L11,7.5 H8.5 V11 H5.5 V7.5 H3 Z" fill="#000"/></svg><svg style="position:absolute;left:1010px;top:311px" width="14" height="14"><path d="M7,11 L11,6.5 H8.5 V3 H5.5 V6.5 H3 Z" fill="#000"/></svg><div style="position:absolute;left:912px;top:344px;width:112px;height:1px;background:#c8c4b4;"></div><div style="position:absolute;left:912px;top:345px;width:112px;height:1px;background:#fff;"></div><div class="t" style="left:915px;top:347px;">Texture group:</div><div style="position:absolute;left:919px;top:359px;width:102px;height:14px;box-sizing:border-box;background:#fff;border:1px solid #9c998c;border-right-color:#fbfaf6;border-bottom-color:#fbfaf6;box-shadow:inset 1px 1px 0 #c4c0b0;"></div><div style="position:absolute;left:1006px;top:361px;width:13px;height:10px;box-sizing:border-box;background:#f0eee6;border:1px solid #fbfaf6;border-right-color:#a09c8c;border-bottom-color:#a09c8c;"></div><svg style="position:absolute;left:1006px;top:361px" width="13" height="10"><path d="M3.5,3.5 H9.5 L6.5,6.5 Z" fill="#000"/></svg><div class="t" style="left:921px;top:359px;width:85px;overflow:hidden;line-height:14px;font-size:8.5px;">All Textures</div><div class="t" style="left:915px;top:375px;">Current texture:</div><div style="position:absolute;left:919px;top:387px;width:102px;height:15px;box-sizing:border-box;background:#fff;border:1px solid #9c998c;border-right-color:#fbfaf6;border-bottom-color:#fbfaf6;box-shadow:inset 1px 1px 0 #c4c0b0;"></div><div style="position:absolute;left:1006px;top:389px;width:13px;height:11px;box-sizing:border-box;background:#f0eee6;border:1px solid #fbfaf6;border-right-color:#a09c8c;border-bottom-color:#a09c8c;"></div><svg style="position:absolute;left:1006px;top:389px" width="13" height="11"><path d="M3.5,4 H9.5 L6.5,7 Z" fill="#000"/></svg><div class="t" style="left:921px;top:387px;width:85px;overflow:hidden;line-height:15px;font-size:8.5px;">&nbsp;concrete/concretefloorl</div><svg style="position:absolute;left:919px;top:408px" width="55" height="59"><filter id="nz" x="0" y="0" width="100%" height="100%"><feTurbulence type="fractalNoise" baseFrequency="0.45" numOctaves="3" seed="7"/><feColorMatrix type="matrix" values="0 0 0 0 0.52  0 0 0 0 0.5  0 0 0 0 0.46  1.3 0 0 0 -0.42"/></filter><rect width="55" height="59" fill="#433f38"/><rect width="55" height="59" filter="url(#nz)"/></svg><div class="t" style="left:977.5px;top:409px;font-size:8px;">512x512</div><div style="position:absolute;left:977px;top:429px;width:45px;height:17px;box-sizing:border-box;background:#f0efe8;border:1px solid #fff;border-right-color:#8a877a;border-bottom-color:#8a877a;box-shadow:inset -1px -1px 0 #c8c4b4;"></div><div class="t" style="left:977px;top:429px;width:45px;text-align:center;line-height:17px;"><u>B</u>rowse...</div><div style="position:absolute;left:977px;top:450px;width:45px;height:17px;box-sizing:border-box;background:#f0efe8;border:1px solid #fff;border-right-color:#8a877a;border-bottom-color:#8a877a;box-shadow:inset -1px -1px 0 #c8c4b4;"></div><div class="t" style="left:977px;top:450px;width:45px;text-align:center;line-height:17px;"><u>R</u>eplace...</div><div style="position:absolute;left:912px;top:472px;width:112px;height:1px;background:#c8c4b4;"></div><div style="position:absolute;left:912px;top:473px;width:112px;height:1px;background:#fff;"></div><div class="t" style="left:914px;top:475px;">Move</div><div class="t" style="left:914px;top:484px;">selected:</div><div style="position:absolute;left:949px;top:476px;width:35px;height:17px;box-sizing:border-box;background:#f0efe8;border:1px solid #fff;border-right-color:#8a877a;border-bottom-color:#8a877a;box-shadow:inset -1px -1px 0 #c8c4b4;"></div><div class="t" style="left:949px;top:476px;width:35px;text-align:center;line-height:17px;color:#a8a598;">toWorld</div><div style="position:absolute;left:987px;top:476px;width:35px;height:17px;box-sizing:border-box;background:#f0efe8;border:1px solid #fff;border-right-color:#8a877a;border-bottom-color:#8a877a;box-shadow:inset -1px -1px 0 #c8c4b4;"></div><div class="t" style="left:987px;top:476px;width:35px;text-align:center;line-height:17px;color:#a8a598;">toEntity</div><div class="t" style="left:915px;top:498px;"><u>C</u>ategories:</div><div style="position:absolute;left:915px;top:510px;width:106px;height:14px;box-sizing:border-box;background:#ece9d8;border:1px solid #9c998c;border-right-color:#fbfaf6;border-bottom-color:#fbfaf6;box-shadow:inset 1px 1px 0 #c4c0b0;"></div><div style="position:absolute;left:1006px;top:512px;width:13px;height:10px;box-sizing:border-box;background:#f0eee6;border:1px solid #fbfaf6;border-right-color:#a09c8c;border-bottom-color:#a09c8c;"></div><svg style="position:absolute;left:1006px;top:512px" width="13" height="10"><path d="M3.5,3.5 H9.5 L6.5,6.5 Z" fill="#b0ada0"/></svg><div class="t" style="left:915px;top:527px;"><u>O</u>bjects:</div><div style="position:absolute;left:915px;top:540px;width:106px;height:15px;box-sizing:border-box;background:#ece9d8;border:1px solid #9c998c;border-right-color:#fbfaf6;border-bottom-color:#fbfaf6;box-shadow:inset 1px 1px 0 #c4c0b0;"></div><div style="position:absolute;left:1006px;top:542px;width:13px;height:11px;box-sizing:border-box;background:#f0eee6;border:1px solid #fbfaf6;border-right-color:#a09c8c;border-bottom-color:#a09c8c;"></div><svg style="position:absolute;left:1006px;top:542px" width="13" height="11"><path d="M3.5,4 H9.5 L6.5,7 Z" fill="#b0ada0"/></svg><div style="position:absolute;left:945px;top:559px;width:25px;height:16px;box-sizing:border-box;background:#fff;border:1px solid #8a877a;border-right-color:#fff;border-bottom-color:#fff;box-shadow:inset 1px 1px 0 #404040;"></div><div class="t" style="left:948px;top:562px;font-size:8.5px;">32</div><div style="position:absolute;left:970px;top:559px;width:13px;height:8px;box-sizing:border-box;background:#f0efe8;border:1px solid #fff;border-right-color:#8a877a;border-bottom-color:#8a877a;box-shadow:inset -1px -1px 0 #c8c4b4;"></div><div class="t" style="left:970px;top:559px;width:13px;text-align:center;line-height:8px;"></div><div style="position:absolute;left:970px;top:567px;width:13px;height:8px;box-sizing:border-box;background:#f0efe8;border:1px solid #fff;border-right-color:#8a877a;border-bottom-color:#8a877a;box-shadow:inset -1px -1px 0 #c8c4b4;"></div><div class="t" style="left:970px;top:567px;width:13px;text-align:center;line-height:8px;"></div><div style="position:absolute;left:976px;top:562px;width:1px;height:1px;background:#000;"></div><div style="position:absolute;left:976px;top:570px;width:1px;height:1px;background:#000;"></div><div style="position:absolute;left:928px;top:578px;width:80px;height:17px;box-sizing:border-box;background:#f0efe8;border:1px solid #fff;border-right-color:#8a877a;border-bottom-color:#8a877a;box-shadow:inset -1px -1px 0 #c8c4b4;"></div><div class="t" style="left:928px;top:578px;width:80px;text-align:center;line-height:17px;"><u>C</u>reate Prefab</div><div style="position:absolute;left:912px;top:597px;width:112px;height:1px;background:#c8c4b4;"></div><div style="position:absolute;left:912px;top:598px;width:112px;height:1px;background:#fff;"></div><div style="position:absolute;left:0px;top:756px;width:1024px;height:13px;background:#ece9d8;"></div><div class="t" style="left:1px;top:760px;font-size:8.5px;">For Help, press F1</div><div style="position:absolute;left:353px;top:758px;width:231px;height:12px;border-left:1px solid #aca899;border-top:1px solid #aca899;box-sizing:border-box;"></div><div class="t" style="left:355px;top:760px;font-size:8.5px;">no selection.</div><div style="position:absolute;left:586px;top:758px;width:79px;height:12px;border-left:1px solid #aca899;border-top:1px solid #aca899;box-sizing:border-box;"></div><div class="t" style="left:588px;top:760px;font-size:8.5px;">@-72, -240</div><div style="position:absolute;left:667px;top:758px;width:139px;height:12px;border-left:1px solid #aca899;border-top:1px solid #aca899;box-sizing:border-box;"></div><div class="t" style="left:669px;top:760px;font-size:8.5px;">77w 14l 199998h @(-97 -129 0)</div><div style="position:absolute;left:808px;top:758px;width:65px;height:12px;border-left:1px solid #aca899;border-top:1px solid #aca899;box-sizing:border-box;"></div><div class="t" style="left:810px;top:760px;font-size:8.5px;">Zoom: 2.23</div><div style="position:absolute;left:874px;top:758px;width:105px;height:12px;border-left:1px solid #aca899;border-top:1px solid #aca899;box-sizing:border-box;"></div><div class="t" style="left:876px;top:760px;font-size:8.5px;">Snap: On Grid: 4</div><div style="position:absolute;left:981px;top:758px;width:40px;height:12px;border-left:1px solid #aca899;border-top:1px solid #aca899;box-sizing:border-box;"></div><div class="t" style="left:983px;top:760px;font-size:8.5px;">&lt;-&gt;</div><div style="position:absolute;left:0px;top:768px;width:1024px;height:3px;background:linear-gradient(#78a0e0,#3a6ac8);"></div></body></html>
